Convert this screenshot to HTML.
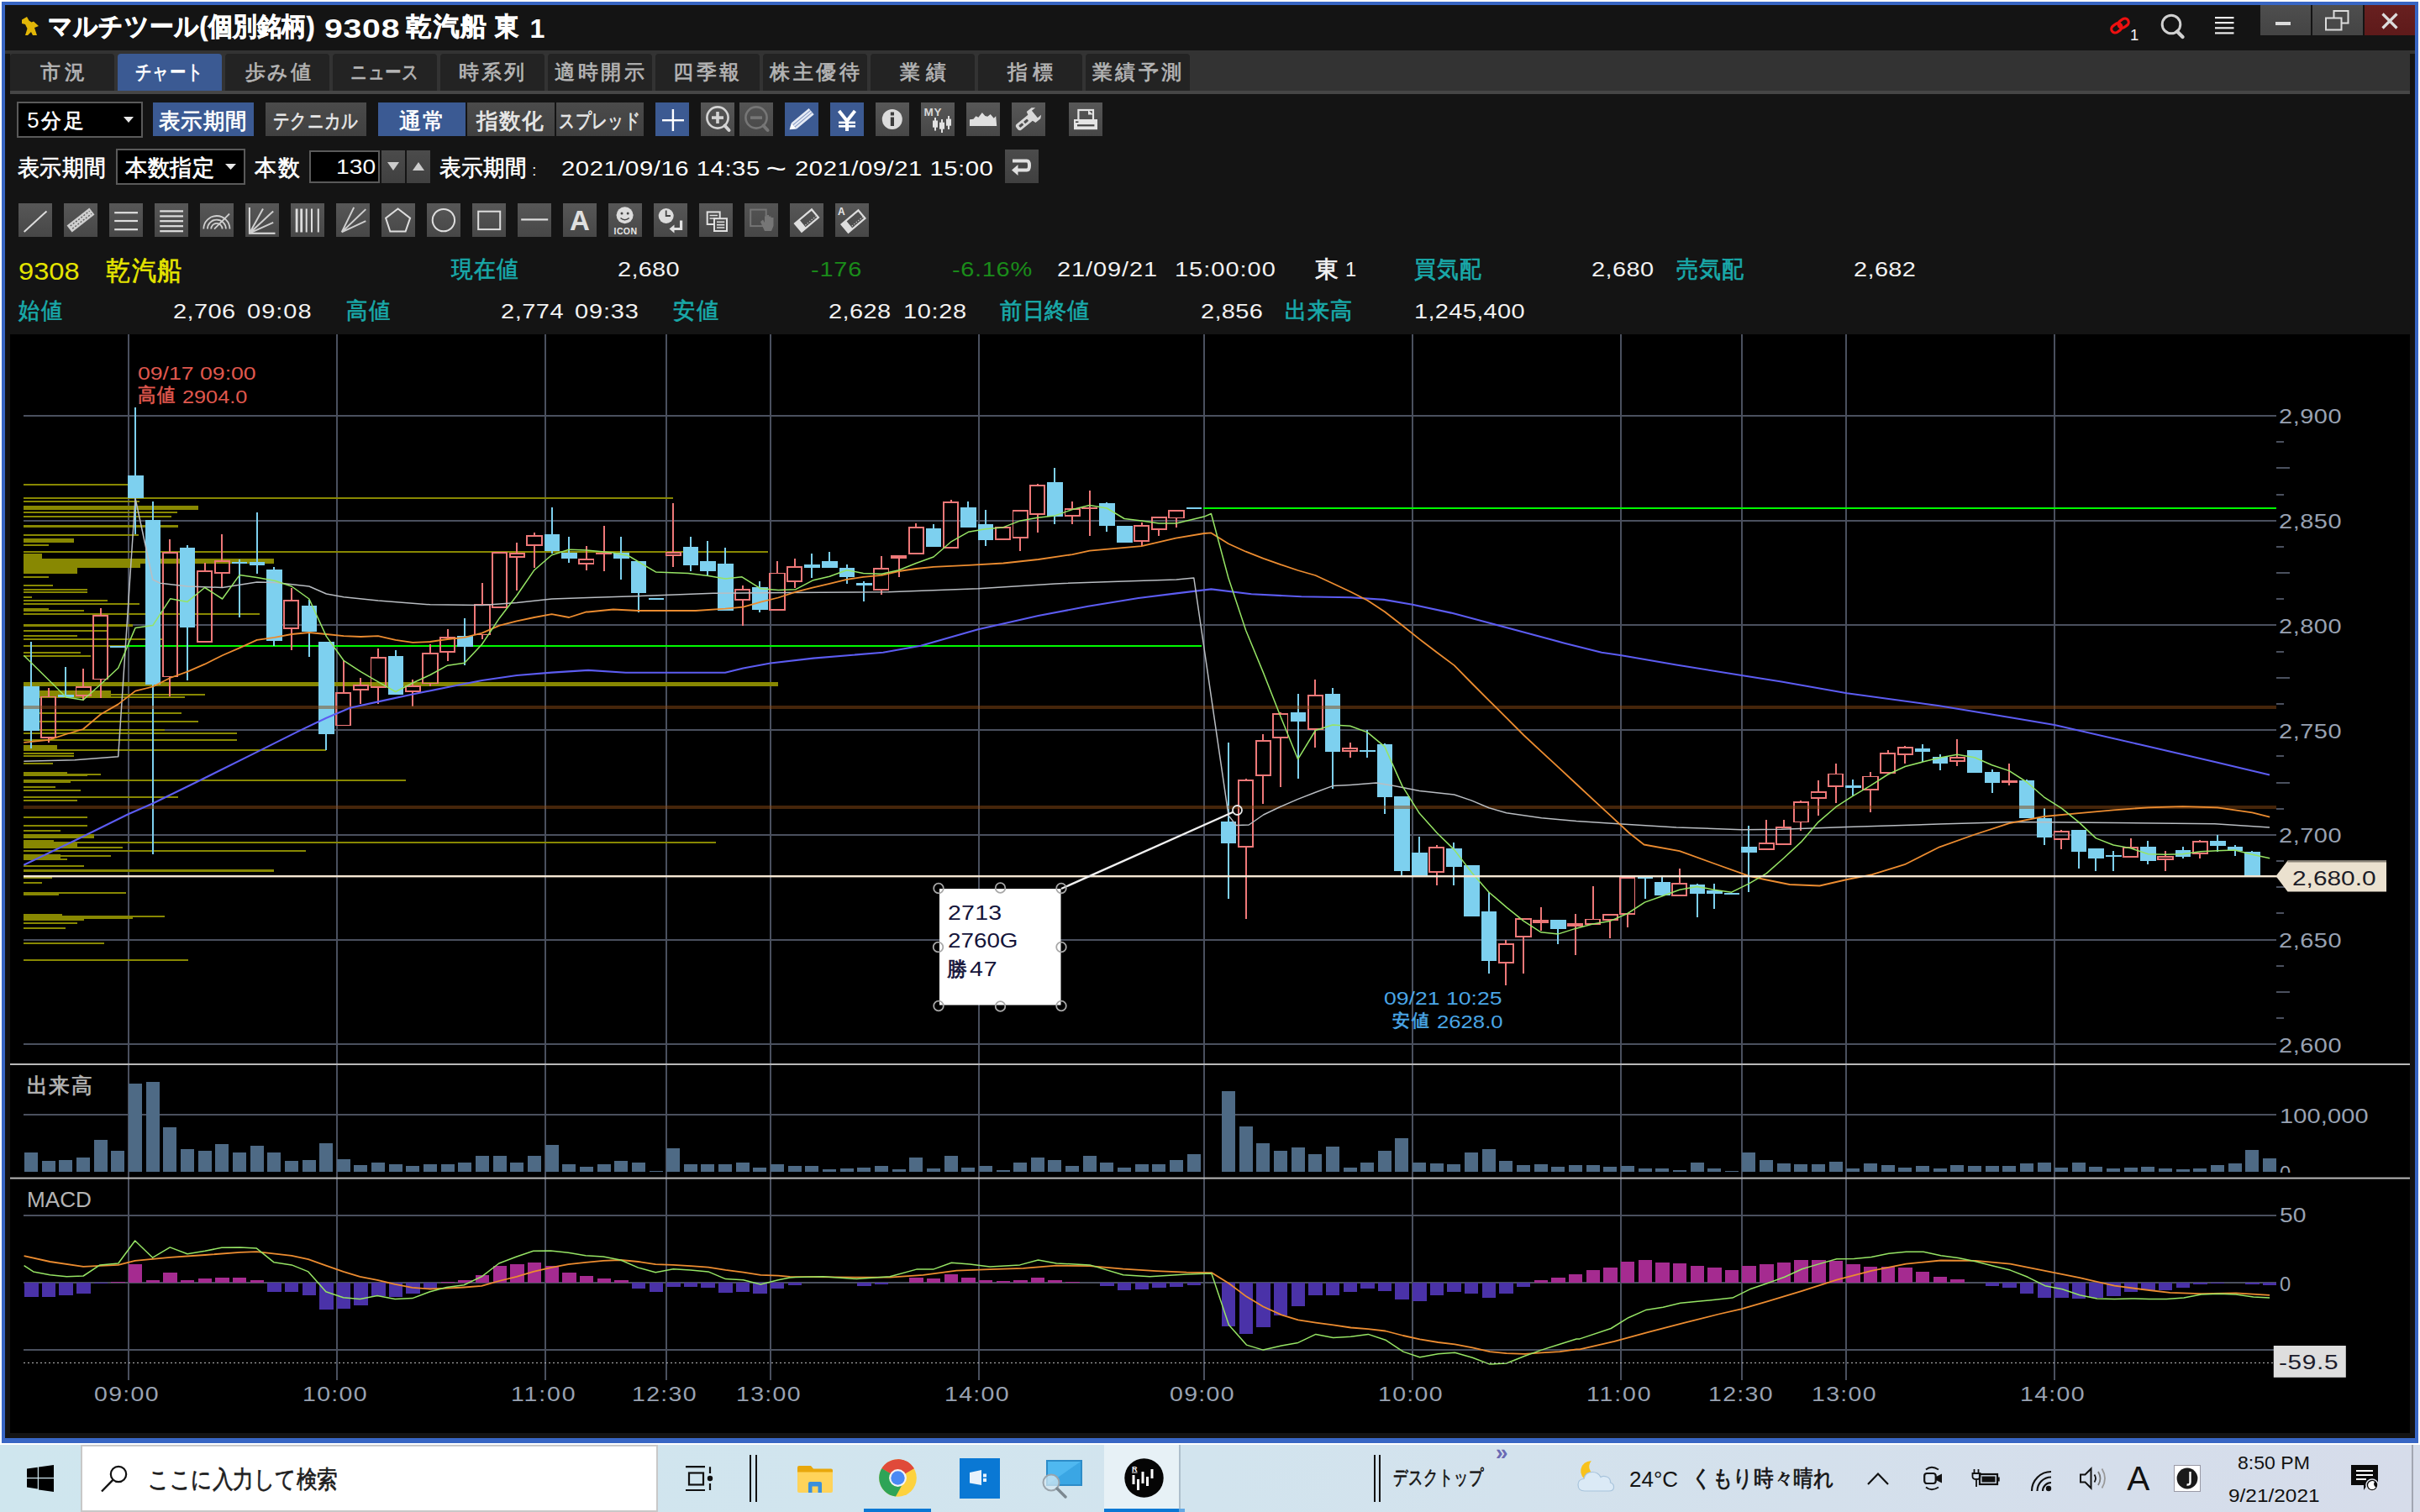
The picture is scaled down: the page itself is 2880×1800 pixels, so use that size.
<!DOCTYPE html>
<html lang="ja"><head><meta charset="utf-8"><title>マルチツール(個別銘柄) 9308 乾汽船 東1</title>
<style>
html,body{margin:0;padding:0;overflow:hidden}
body{width:2880px;height:1800px;position:relative;overflow:hidden;background:#fff;font-family:"Liberation Sans",sans-serif}
.t{position:absolute;white-space:nowrap;line-height:1;font-family:"Liberation Sans",sans-serif}
.j{text-align:justify;text-align-last:justify;overflow:visible;-webkit-text-stroke:0.7px currentColor}
.b{position:absolute}
svg{position:absolute;overflow:visible}
</style></head><body>
<div class="b" style="left:2px;top:2px;width:2876px;height:1716px;background:#3866c4;"></div>
<div class="b" style="left:6px;top:6px;width:2868px;height:1706px;background:#141414;"></div>
<div class="b" style="left:6px;top:59.5px;width:2868px;height:4.5px;background:#333;"></div>
<div class="b" style="left:12px;top:64px;width:2856px;height:44px;background:#333;"></div>
<div class="b" style="left:12px;top:108px;width:2856px;height:4px;background:#464646;"></div>
<svg width="2880" height="1800" viewBox="0 0 2880 1800" style="position:absolute;left:0;top:0">
<rect x="12" y="398" width="2856" height="1308" fill="#000"/>
<g shape-rendering="crispEdges">
<rect x="152" y="398" width="2" height="1245" fill="#4a505e"/>
<rect x="400" y="398" width="2" height="1245" fill="#4a505e"/>
<rect x="648" y="398" width="2" height="1245" fill="#4a505e"/>
<rect x="792" y="398" width="2" height="1245" fill="#4a505e"/>
<rect x="916" y="398" width="2" height="1245" fill="#4a505e"/>
<rect x="1164" y="398" width="2" height="1245" fill="#4a505e"/>
<rect x="1432" y="398" width="2" height="1245" fill="#4a505e"/>
<rect x="1680" y="398" width="2" height="1245" fill="#4a505e"/>
<rect x="1928" y="398" width="2" height="1245" fill="#4a505e"/>
<rect x="2072" y="398" width="2" height="1245" fill="#4a505e"/>
<rect x="2196" y="398" width="2" height="1245" fill="#4a505e"/>
<rect x="2444" y="398" width="2" height="1245" fill="#4a505e"/>
<rect x="28" y="494" width="2681" height="2" fill="#4a505e"/>
<rect x="28" y="618.7" width="2681" height="2" fill="#4a505e"/>
<rect x="28" y="743.4" width="2681" height="2" fill="#4a505e"/>
<rect x="28" y="868.1" width="2681" height="2" fill="#4a505e"/>
<rect x="28" y="992.8" width="2681" height="2" fill="#4a505e"/>
<rect x="28" y="1117.5" width="2681" height="2" fill="#4a505e"/>
<rect x="28" y="1242.2" width="2681" height="2" fill="#4a505e"/>
<rect x="28" y="1325.7" width="2681" height="2" fill="#4a505e"/>
<rect x="28" y="1445.8" width="2681" height="2" fill="#4a505e"/>
<rect x="28" y="1526.2" width="2681" height="2" fill="#4a505e"/>
<rect x="28" y="1606" width="2681" height="2" fill="#4a505e"/>
<rect x="2709" y="525.2" width="9" height="2" fill="#4a505e"/>
<rect x="2709" y="556.4" width="16" height="2" fill="#4a505e"/>
<rect x="2709" y="587.5" width="9" height="2" fill="#4a505e"/>
<rect x="2709" y="649.9" width="9" height="2" fill="#4a505e"/>
<rect x="2709" y="681.1" width="16" height="2" fill="#4a505e"/>
<rect x="2709" y="712.2" width="9" height="2" fill="#4a505e"/>
<rect x="2709" y="774.6" width="9" height="2" fill="#4a505e"/>
<rect x="2709" y="805.8" width="16" height="2" fill="#4a505e"/>
<rect x="2709" y="836.9" width="9" height="2" fill="#4a505e"/>
<rect x="2709" y="899.3" width="9" height="2" fill="#4a505e"/>
<rect x="2709" y="930.5" width="16" height="2" fill="#4a505e"/>
<rect x="2709" y="961.6" width="9" height="2" fill="#4a505e"/>
<rect x="2709" y="1024" width="9" height="2" fill="#4a505e"/>
<rect x="2709" y="1055.1" width="16" height="2" fill="#4a505e"/>
<rect x="2709" y="1086.3" width="9" height="2" fill="#4a505e"/>
<rect x="2709" y="1148.7" width="9" height="2" fill="#4a505e"/>
<rect x="2709" y="1179.8" width="16" height="2" fill="#4a505e"/>
<rect x="2709" y="1211" width="9" height="2" fill="#4a505e"/>
<rect x="28" y="576" width="124" height="2" fill="#888802"/>
<rect x="28" y="596" width="138" height="2" fill="#888802"/>
<rect x="28" y="602" width="208" height="5" fill="#888802"/>
<rect x="28" y="609" width="183" height="2" fill="#888802"/>
<rect x="28" y="614" width="176" height="2" fill="#888802"/>
<rect x="28" y="624.5" width="184" height="3.5" fill="#888802"/>
<rect x="28" y="636" width="137" height="2" fill="#888802"/>
<rect x="28" y="641" width="60" height="4.5" fill="#888802"/>
<rect x="28" y="648" width="30" height="2" fill="#888802"/>
<rect x="28" y="659" width="22" height="6" fill="#888802"/>
<rect x="28" y="665" width="298" height="6" fill="#888802"/>
<rect x="28" y="671" width="139" height="5" fill="#888802"/>
<rect x="28" y="676" width="64" height="7" fill="#888802"/>
<rect x="28" y="686" width="30" height="2" fill="#888802"/>
<rect x="28" y="695.5" width="35" height="2" fill="#888802"/>
<rect x="28" y="700.5" width="76" height="2" fill="#888802"/>
<rect x="28" y="703.5" width="76" height="2" fill="#888802"/>
<rect x="28" y="710" width="10" height="2" fill="#888802"/>
<rect x="28" y="714" width="100" height="2" fill="#888802"/>
<rect x="28" y="718" width="138" height="2" fill="#888802"/>
<rect x="28" y="724" width="30" height="3" fill="#888802"/>
<rect x="28" y="726" width="72" height="2" fill="#888802"/>
<rect x="28" y="729.5" width="281" height="2" fill="#888802"/>
<rect x="28" y="743" width="130" height="3" fill="#888802"/>
<rect x="28" y="749.5" width="100" height="2" fill="#888802"/>
<rect x="28" y="755.5" width="64" height="2" fill="#888802"/>
<rect x="28" y="760" width="165" height="2" fill="#888802"/>
<rect x="28" y="768" width="144" height="2" fill="#888802"/>
<rect x="28" y="776" width="68" height="2" fill="#888802"/>
<rect x="28" y="780" width="80" height="2" fill="#888802"/>
<rect x="28" y="822" width="104" height="9" fill="#888802"/>
<rect x="28" y="825.5" width="216" height="2" fill="#888802"/>
<rect x="28" y="828.5" width="192" height="2" fill="#888802"/>
<rect x="28" y="848" width="188" height="2" fill="#888802"/>
<rect x="28" y="857.5" width="208" height="2" fill="#888802"/>
<rect x="28" y="868" width="168" height="2" fill="#888802"/>
<rect x="28" y="871.5" width="254" height="2" fill="#888802"/>
<rect x="28" y="879.5" width="254" height="2" fill="#888802"/>
<rect x="28" y="887" width="40" height="5" fill="#888802"/>
<rect x="28" y="892" width="360" height="2" fill="#888802"/>
<rect x="28" y="895.5" width="60" height="2" fill="#888802"/>
<rect x="28" y="899" width="60" height="2" fill="#888802"/>
<rect x="28" y="907.5" width="35" height="2" fill="#888802"/>
<rect x="28" y="918.5" width="52" height="2.5" fill="#888802"/>
<rect x="28" y="921" width="92" height="1.5" fill="#888802"/>
<rect x="28" y="922.5" width="76" height="1.5" fill="#888802"/>
<rect x="28" y="928" width="455" height="2" fill="#888802"/>
<rect x="28" y="927.5" width="56" height="4.5" fill="#888802"/>
<rect x="28" y="935.5" width="38" height="2" fill="#888802"/>
<rect x="28" y="940" width="68" height="2" fill="#888802"/>
<rect x="28" y="948" width="184" height="2" fill="#888802"/>
<rect x="28" y="952" width="64" height="2" fill="#888802"/>
<rect x="28" y="972" width="76" height="2" fill="#888802"/>
<rect x="28" y="981.5" width="76" height="2" fill="#888802"/>
<rect x="28" y="987.5" width="44" height="2" fill="#888802"/>
<rect x="28" y="993" width="84" height="4.5" fill="#888802"/>
<rect x="28" y="1000" width="36" height="2" fill="#888802"/>
<rect x="28" y="1002" width="64" height="6" fill="#888802"/>
<rect x="28" y="1008" width="118" height="2" fill="#888802"/>
<rect x="28" y="1012" width="336" height="2" fill="#888802"/>
<rect x="28" y="1018" width="104" height="2" fill="#888802"/>
<rect x="28" y="1017" width="44" height="6" fill="#888802"/>
<rect x="28" y="1022" width="52" height="2" fill="#888802"/>
<rect x="28" y="1030" width="72" height="2" fill="#888802"/>
<rect x="28" y="1034.5" width="298" height="3.5" fill="#888802"/>
<rect x="28" y="1044" width="34" height="2" fill="#888802"/>
<rect x="28" y="1050" width="22" height="2" fill="#888802"/>
<rect x="28" y="1062" width="42" height="4" fill="#888802"/>
<rect x="28" y="1062" width="122" height="2" fill="#888802"/>
<rect x="28" y="1088" width="46" height="7" fill="#888802"/>
<rect x="28" y="1090" width="168" height="2" fill="#888802"/>
<rect x="28" y="1091" width="130" height="2.5" fill="#888802"/>
<rect x="28" y="1093.5" width="72" height="2" fill="#888802"/>
<rect x="28" y="1098" width="64" height="2" fill="#888802"/>
<rect x="28" y="1104" width="50" height="2" fill="#888802"/>
<rect x="28" y="1122" width="96" height="2" fill="#888802"/>
<rect x="28" y="1142" width="196" height="2" fill="#888802"/>
<rect x="28" y="592" width="773" height="2" fill="#888802"/>
<rect x="28" y="656" width="886" height="2" fill="#888802"/>
<rect x="28" y="812" width="898" height="4.5" fill="#888802"/>
<rect x="28" y="1001.5" width="824" height="2" fill="#888802"/>
<rect x="150" y="768" width="1280" height="2" fill="#00fa00"/>
<rect x="1432" y="604.2" width="1277" height="2" fill="#00fa00"/>
</g>
<g shape-rendering="crispEdges">
<rect x="29.1" y="1372.4" width="16" height="22.6" fill="#4e6a85"/>
<rect x="49.8" y="1382.3" width="16" height="12.7" fill="#4e6a85"/>
<rect x="70.4" y="1381.1" width="16" height="13.9" fill="#4e6a85"/>
<rect x="91.1" y="1378.3" width="16" height="16.7" fill="#4e6a85"/>
<rect x="111.7" y="1356.5" width="16" height="38.5" fill="#4e6a85"/>
<rect x="132.3" y="1370.4" width="16" height="24.6" fill="#4e6a85"/>
<rect x="153" y="1289.9" width="16" height="105.1" fill="#4e6a85"/>
<rect x="173.7" y="1287.9" width="16" height="107.1" fill="#4e6a85"/>
<rect x="194.3" y="1342.2" width="16" height="52.8" fill="#4e6a85"/>
<rect x="214.9" y="1368" width="16" height="27" fill="#4e6a85"/>
<rect x="235.6" y="1370.4" width="16" height="24.6" fill="#4e6a85"/>
<rect x="256.2" y="1362.1" width="16" height="32.9" fill="#4e6a85"/>
<rect x="276.9" y="1372.4" width="16" height="22.6" fill="#4e6a85"/>
<rect x="297.5" y="1364.1" width="16" height="30.9" fill="#4e6a85"/>
<rect x="318.2" y="1372.4" width="16" height="22.6" fill="#4e6a85"/>
<rect x="338.9" y="1381.5" width="16" height="13.5" fill="#4e6a85"/>
<rect x="359.5" y="1381.1" width="16" height="13.9" fill="#4e6a85"/>
<rect x="380.1" y="1360.5" width="16" height="34.5" fill="#4e6a85"/>
<rect x="400.8" y="1380.3" width="16" height="14.7" fill="#4e6a85"/>
<rect x="421.4" y="1387.1" width="16" height="7.9" fill="#4e6a85"/>
<rect x="442.1" y="1384.3" width="16" height="10.7" fill="#4e6a85"/>
<rect x="462.8" y="1386.3" width="16" height="8.7" fill="#4e6a85"/>
<rect x="483.4" y="1387.9" width="16" height="7.1" fill="#4e6a85"/>
<rect x="504" y="1385.9" width="16" height="9.1" fill="#4e6a85"/>
<rect x="524.7" y="1386.3" width="16" height="8.7" fill="#4e6a85"/>
<rect x="545.3" y="1383.9" width="16" height="11.1" fill="#4e6a85"/>
<rect x="566" y="1376" width="16" height="19" fill="#4e6a85"/>
<rect x="586.6" y="1376" width="16" height="19" fill="#4e6a85"/>
<rect x="607.3" y="1383.9" width="16" height="11.1" fill="#4e6a85"/>
<rect x="628" y="1376" width="16" height="19" fill="#4e6a85"/>
<rect x="648.6" y="1362.5" width="16" height="32.5" fill="#4e6a85"/>
<rect x="669.2" y="1386.3" width="16" height="8.7" fill="#4e6a85"/>
<rect x="689.9" y="1389.4" width="16" height="5.6" fill="#4e6a85"/>
<rect x="710.5" y="1385.9" width="16" height="9.1" fill="#4e6a85"/>
<rect x="731.2" y="1382.3" width="16" height="12.7" fill="#4e6a85"/>
<rect x="751.8" y="1384.3" width="16" height="10.7" fill="#4e6a85"/>
<rect x="772.5" y="1394" width="16" height="1" fill="#4e6a85"/>
<rect x="793.1" y="1367.2" width="16" height="27.8" fill="#4e6a85"/>
<rect x="813.8" y="1386.3" width="16" height="8.7" fill="#4e6a85"/>
<rect x="834.4" y="1386.3" width="16" height="8.7" fill="#4e6a85"/>
<rect x="855.1" y="1385.5" width="16" height="9.5" fill="#4e6a85"/>
<rect x="875.8" y="1384.3" width="16" height="10.7" fill="#4e6a85"/>
<rect x="896.4" y="1390.2" width="16" height="4.8" fill="#4e6a85"/>
<rect x="917" y="1386.3" width="16" height="8.7" fill="#4e6a85"/>
<rect x="937.7" y="1387.9" width="16" height="7.1" fill="#4e6a85"/>
<rect x="958.3" y="1388.3" width="16" height="6.7" fill="#4e6a85"/>
<rect x="979" y="1392.2" width="16" height="2.8" fill="#4e6a85"/>
<rect x="999.6" y="1391" width="16" height="4" fill="#4e6a85"/>
<rect x="1020.3" y="1390.2" width="16" height="4.8" fill="#4e6a85"/>
<rect x="1040.9" y="1388.3" width="16" height="6.7" fill="#4e6a85"/>
<rect x="1061.6" y="1392.2" width="16" height="2.8" fill="#4e6a85"/>
<rect x="1082.2" y="1377.9" width="16" height="17.1" fill="#4e6a85"/>
<rect x="1102.9" y="1391" width="16" height="4" fill="#4e6a85"/>
<rect x="1123.5" y="1376.4" width="16" height="18.6" fill="#4e6a85"/>
<rect x="1144.2" y="1390.2" width="16" height="4.8" fill="#4e6a85"/>
<rect x="1164.8" y="1387.9" width="16" height="7.1" fill="#4e6a85"/>
<rect x="1185.5" y="1392.6" width="16" height="2.4" fill="#4e6a85"/>
<rect x="1206.1" y="1384.3" width="16" height="10.7" fill="#4e6a85"/>
<rect x="1226.8" y="1378.3" width="16" height="16.7" fill="#4e6a85"/>
<rect x="1247.4" y="1381.1" width="16" height="13.9" fill="#4e6a85"/>
<rect x="1268.1" y="1388.3" width="16" height="6.7" fill="#4e6a85"/>
<rect x="1288.8" y="1376.4" width="16" height="18.6" fill="#4e6a85"/>
<rect x="1309.4" y="1384.3" width="16" height="10.7" fill="#4e6a85"/>
<rect x="1330" y="1389.8" width="16" height="5.2" fill="#4e6a85"/>
<rect x="1350.7" y="1386.3" width="16" height="8.7" fill="#4e6a85"/>
<rect x="1371.3" y="1385.9" width="16" height="9.1" fill="#4e6a85"/>
<rect x="1392" y="1381.1" width="16" height="13.9" fill="#4e6a85"/>
<rect x="1412.6" y="1374.4" width="16" height="20.6" fill="#4e6a85"/>
<rect x="1453.9" y="1298.6" width="16" height="96.4" fill="#4e6a85"/>
<rect x="1474.6" y="1340.7" width="16" height="54.3" fill="#4e6a85"/>
<rect x="1495.2" y="1360.5" width="16" height="34.5" fill="#4e6a85"/>
<rect x="1515.9" y="1370" width="16" height="25" fill="#4e6a85"/>
<rect x="1536.5" y="1366.4" width="16" height="28.6" fill="#4e6a85"/>
<rect x="1557.2" y="1374.4" width="16" height="20.6" fill="#4e6a85"/>
<rect x="1577.8" y="1364.5" width="16" height="30.5" fill="#4e6a85"/>
<rect x="1598.5" y="1390.2" width="16" height="4.8" fill="#4e6a85"/>
<rect x="1619.1" y="1384.3" width="16" height="10.7" fill="#4e6a85"/>
<rect x="1639.8" y="1370.4" width="16" height="24.6" fill="#4e6a85"/>
<rect x="1660.4" y="1354.5" width="16" height="40.5" fill="#4e6a85"/>
<rect x="1681.1" y="1383.9" width="16" height="11.1" fill="#4e6a85"/>
<rect x="1701.8" y="1385.1" width="16" height="9.9" fill="#4e6a85"/>
<rect x="1722.4" y="1385.9" width="16" height="9.1" fill="#4e6a85"/>
<rect x="1743" y="1372.4" width="16" height="22.6" fill="#4e6a85"/>
<rect x="1763.7" y="1368.4" width="16" height="26.6" fill="#4e6a85"/>
<rect x="1784.3" y="1382.3" width="16" height="12.7" fill="#4e6a85"/>
<rect x="1805" y="1387.1" width="16" height="7.9" fill="#4e6a85"/>
<rect x="1825.6" y="1385.9" width="16" height="9.1" fill="#4e6a85"/>
<rect x="1846.3" y="1388.7" width="16" height="6.3" fill="#4e6a85"/>
<rect x="1866.9" y="1386.7" width="16" height="8.3" fill="#4e6a85"/>
<rect x="1887.6" y="1386.7" width="16" height="8.3" fill="#4e6a85"/>
<rect x="1908.2" y="1389.2" width="16" height="5.8" fill="#4e6a85"/>
<rect x="1928.9" y="1387.6" width="16" height="7.4" fill="#4e6a85"/>
<rect x="1949.5" y="1391.3" width="16" height="3.7" fill="#4e6a85"/>
<rect x="1970.2" y="1390.5" width="16" height="4.5" fill="#4e6a85"/>
<rect x="1990.8" y="1392.5" width="16" height="2.5" fill="#4e6a85"/>
<rect x="2011.5" y="1384.3" width="16" height="10.7" fill="#4e6a85"/>
<rect x="2032.1" y="1390.9" width="16" height="4.1" fill="#4e6a85"/>
<rect x="2052.8" y="1394" width="16" height="1" fill="#4e6a85"/>
<rect x="2073.4" y="1371.9" width="16" height="23.1" fill="#4e6a85"/>
<rect x="2094.1" y="1381" width="16" height="14" fill="#4e6a85"/>
<rect x="2114.8" y="1384.7" width="16" height="10.3" fill="#4e6a85"/>
<rect x="2135.4" y="1386.3" width="16" height="8.7" fill="#4e6a85"/>
<rect x="2156.1" y="1386.3" width="16" height="8.7" fill="#4e6a85"/>
<rect x="2176.7" y="1382.6" width="16" height="12.4" fill="#4e6a85"/>
<rect x="2197.3" y="1390.9" width="16" height="4.1" fill="#4e6a85"/>
<rect x="2218" y="1385.1" width="16" height="9.9" fill="#4e6a85"/>
<rect x="2238.6" y="1386.7" width="16" height="8.3" fill="#4e6a85"/>
<rect x="2259.3" y="1390" width="16" height="5" fill="#4e6a85"/>
<rect x="2279.9" y="1388.4" width="16" height="6.6" fill="#4e6a85"/>
<rect x="2300.6" y="1391.3" width="16" height="3.7" fill="#4e6a85"/>
<rect x="2321.2" y="1386.7" width="16" height="8.3" fill="#4e6a85"/>
<rect x="2341.9" y="1388.4" width="16" height="6.6" fill="#4e6a85"/>
<rect x="2362.5" y="1387.6" width="16" height="7.4" fill="#4e6a85"/>
<rect x="2383.2" y="1388.4" width="16" height="6.6" fill="#4e6a85"/>
<rect x="2403.8" y="1385.1" width="16" height="9.9" fill="#4e6a85"/>
<rect x="2424.5" y="1383.8" width="16" height="11.2" fill="#4e6a85"/>
<rect x="2445.1" y="1390" width="16" height="5" fill="#4e6a85"/>
<rect x="2465.8" y="1384.3" width="16" height="10.7" fill="#4e6a85"/>
<rect x="2486.4" y="1389.2" width="16" height="5.8" fill="#4e6a85"/>
<rect x="2507.1" y="1390.9" width="16" height="4.1" fill="#4e6a85"/>
<rect x="2527.8" y="1390" width="16" height="5" fill="#4e6a85"/>
<rect x="2548.4" y="1388.8" width="16" height="6.2" fill="#4e6a85"/>
<rect x="2569" y="1390.9" width="16" height="4.1" fill="#4e6a85"/>
<rect x="2589.7" y="1391.7" width="16" height="3.3" fill="#4e6a85"/>
<rect x="2610.3" y="1390.9" width="16" height="4.1" fill="#4e6a85"/>
<rect x="2631" y="1387.1" width="16" height="7.9" fill="#4e6a85"/>
<rect x="2651.6" y="1385.1" width="16" height="9.9" fill="#4e6a85"/>
<rect x="2672.3" y="1368.6" width="16" height="26.4" fill="#4e6a85"/>
<rect x="2692.9" y="1379.3" width="16" height="15.7" fill="#4e6a85"/>
<rect x="29.1" y="1527.2" width="16.4" height="17.1" fill="#4a32a8"/>
<rect x="49.8" y="1527.2" width="16.4" height="17.1" fill="#4a32a8"/>
<rect x="70.4" y="1527.2" width="16.4" height="15.1" fill="#4a32a8"/>
<rect x="91.1" y="1527.2" width="16.4" height="12.3" fill="#4a32a8"/>
<rect x="111.7" y="1527.2" width="16.4" height="1.2" fill="#4a32a8"/>
<rect x="132.3" y="1525.6" width="16.4" height="1.6" fill="#a52b90"/>
<rect x="153" y="1504.6" width="16.4" height="22.6" fill="#a52b90"/>
<rect x="173.7" y="1524.4" width="16.4" height="2.8" fill="#a52b90"/>
<rect x="194.3" y="1515.3" width="16.4" height="11.9" fill="#a52b90"/>
<rect x="214.9" y="1524.4" width="16.4" height="2.8" fill="#a52b90"/>
<rect x="235.6" y="1521.6" width="16.4" height="5.6" fill="#a52b90"/>
<rect x="256.2" y="1520.5" width="16.4" height="6.7" fill="#a52b90"/>
<rect x="276.9" y="1521.2" width="16.4" height="6" fill="#a52b90"/>
<rect x="297.5" y="1523.6" width="16.4" height="3.6" fill="#a52b90"/>
<rect x="318.2" y="1527.2" width="16.4" height="10.3" fill="#4a32a8"/>
<rect x="338.9" y="1527.2" width="16.4" height="10.3" fill="#4a32a8"/>
<rect x="359.5" y="1527.2" width="16.4" height="15.1" fill="#4a32a8"/>
<rect x="380.1" y="1527.2" width="16.4" height="31.7" fill="#4a32a8"/>
<rect x="400.8" y="1527.2" width="16.4" height="30.9" fill="#4a32a8"/>
<rect x="421.4" y="1527.2" width="16.4" height="27" fill="#4a32a8"/>
<rect x="442.1" y="1527.2" width="16.4" height="15.9" fill="#4a32a8"/>
<rect x="462.8" y="1527.2" width="16.4" height="17.1" fill="#4a32a8"/>
<rect x="483.4" y="1527.2" width="16.4" height="13.1" fill="#4a32a8"/>
<rect x="504" y="1527.2" width="16.4" height="6.3" fill="#4a32a8"/>
<rect x="524.7" y="1525.6" width="16.4" height="1.6" fill="#a52b90"/>
<rect x="545.3" y="1524.4" width="16.4" height="2.8" fill="#a52b90"/>
<rect x="566" y="1517.7" width="16.4" height="9.5" fill="#a52b90"/>
<rect x="586.6" y="1507.4" width="16.4" height="19.8" fill="#a52b90"/>
<rect x="607.3" y="1504.6" width="16.4" height="22.6" fill="#a52b90"/>
<rect x="628" y="1503.4" width="16.4" height="23.8" fill="#a52b90"/>
<rect x="648.6" y="1507.4" width="16.4" height="19.8" fill="#a52b90"/>
<rect x="669.2" y="1514.5" width="16.4" height="12.7" fill="#a52b90"/>
<rect x="689.9" y="1518.5" width="16.4" height="8.7" fill="#a52b90"/>
<rect x="710.5" y="1521.6" width="16.4" height="5.6" fill="#a52b90"/>
<rect x="731.2" y="1524.4" width="16.4" height="2.8" fill="#a52b90"/>
<rect x="751.8" y="1527.2" width="16.4" height="6.3" fill="#4a32a8"/>
<rect x="772.5" y="1527.2" width="16.4" height="10.3" fill="#4a32a8"/>
<rect x="793.1" y="1527.2" width="16.4" height="5.2" fill="#4a32a8"/>
<rect x="813.8" y="1527.2" width="16.4" height="4.4" fill="#4a32a8"/>
<rect x="834.4" y="1527.2" width="16.4" height="6" fill="#4a32a8"/>
<rect x="855.1" y="1527.2" width="16.4" height="11.9" fill="#4a32a8"/>
<rect x="875.8" y="1527.2" width="16.4" height="11.1" fill="#4a32a8"/>
<rect x="896.4" y="1527.2" width="16.4" height="13.1" fill="#4a32a8"/>
<rect x="917" y="1527.2" width="16.4" height="7.1" fill="#4a32a8"/>
<rect x="937.7" y="1527.2" width="16.4" height="3.2" fill="#4a32a8"/>
<rect x="1020.3" y="1527.2" width="16.4" height="4" fill="#4a32a8"/>
<rect x="1040.9" y="1527.2" width="16.4" height="1.6" fill="#4a32a8"/>
<rect x="1082.2" y="1521.2" width="16.4" height="6" fill="#a52b90"/>
<rect x="1102.9" y="1522.4" width="16.4" height="4.8" fill="#a52b90"/>
<rect x="1123.5" y="1517.3" width="16.4" height="9.9" fill="#a52b90"/>
<rect x="1144.2" y="1520.5" width="16.4" height="6.7" fill="#a52b90"/>
<rect x="1164.8" y="1524.4" width="16.4" height="2.8" fill="#a52b90"/>
<rect x="1185.5" y="1525.2" width="16.4" height="2" fill="#a52b90"/>
<rect x="1206.1" y="1523.6" width="16.4" height="3.6" fill="#a52b90"/>
<rect x="1226.8" y="1520.5" width="16.4" height="6.7" fill="#a52b90"/>
<rect x="1247.4" y="1524.4" width="16.4" height="2.8" fill="#a52b90"/>
<rect x="1268.1" y="1525.6" width="16.4" height="1.6" fill="#a52b90"/>
<rect x="1309.4" y="1527.2" width="16.4" height="4" fill="#4a32a8"/>
<rect x="1330" y="1527.2" width="16.4" height="9.1" fill="#4a32a8"/>
<rect x="1350.7" y="1527.2" width="16.4" height="7.9" fill="#4a32a8"/>
<rect x="1371.3" y="1527.2" width="16.4" height="6" fill="#4a32a8"/>
<rect x="1392" y="1527.2" width="16.4" height="4.4" fill="#4a32a8"/>
<rect x="1412.6" y="1527.2" width="16.4" height="2.4" fill="#4a32a8"/>
<rect x="1453.9" y="1527.2" width="16.4" height="51.6" fill="#4a32a8"/>
<rect x="1474.6" y="1527.2" width="16.4" height="60.7" fill="#4a32a8"/>
<rect x="1495.2" y="1527.2" width="16.4" height="52.8" fill="#4a32a8"/>
<rect x="1515.9" y="1527.2" width="16.4" height="38.9" fill="#4a32a8"/>
<rect x="1536.5" y="1527.2" width="16.4" height="28.2" fill="#4a32a8"/>
<rect x="1557.2" y="1527.2" width="16.4" height="15.1" fill="#4a32a8"/>
<rect x="1577.8" y="1527.2" width="16.4" height="15.1" fill="#4a32a8"/>
<rect x="1598.5" y="1527.2" width="16.4" height="11.1" fill="#4a32a8"/>
<rect x="1619.1" y="1527.2" width="16.4" height="7.1" fill="#4a32a8"/>
<rect x="1639.8" y="1527.2" width="16.4" height="9.9" fill="#4a32a8"/>
<rect x="1660.4" y="1527.2" width="16.4" height="19.8" fill="#4a32a8"/>
<rect x="1681.1" y="1527.2" width="16.4" height="21.8" fill="#4a32a8"/>
<rect x="1701.8" y="1527.2" width="16.4" height="15.1" fill="#4a32a8"/>
<rect x="1722.4" y="1527.2" width="16.4" height="10.3" fill="#4a32a8"/>
<rect x="1743" y="1527.2" width="16.4" height="13.1" fill="#4a32a8"/>
<rect x="1763.7" y="1527.2" width="16.4" height="17.9" fill="#4a32a8"/>
<rect x="1784.3" y="1527.2" width="16.4" height="13.1" fill="#4a32a8"/>
<rect x="1805" y="1527.2" width="16.4" height="4.4" fill="#4a32a8"/>
<rect x="1825.6" y="1524.4" width="16.4" height="2.8" fill="#a52b90"/>
<rect x="1846.3" y="1521.2" width="16.4" height="6" fill="#a52b90"/>
<rect x="1866.9" y="1517.3" width="16.4" height="9.9" fill="#a52b90"/>
<rect x="1887.6" y="1512.3" width="16.4" height="14.9" fill="#a52b90"/>
<rect x="1908.2" y="1509.4" width="16.4" height="17.8" fill="#a52b90"/>
<rect x="1928.9" y="1502.4" width="16.4" height="24.8" fill="#a52b90"/>
<rect x="1949.5" y="1500.3" width="16.4" height="26.9" fill="#a52b90"/>
<rect x="1970.2" y="1503.2" width="16.4" height="24" fill="#a52b90"/>
<rect x="1990.8" y="1504.1" width="16.4" height="23.1" fill="#a52b90"/>
<rect x="2011.5" y="1506.5" width="16.4" height="20.7" fill="#a52b90"/>
<rect x="2032.1" y="1508.6" width="16.4" height="18.6" fill="#a52b90"/>
<rect x="2052.8" y="1511.5" width="16.4" height="15.7" fill="#a52b90"/>
<rect x="2073.4" y="1507.4" width="16.4" height="19.8" fill="#a52b90"/>
<rect x="2094.1" y="1505.3" width="16.4" height="21.9" fill="#a52b90"/>
<rect x="2114.8" y="1503.2" width="16.4" height="24" fill="#a52b90"/>
<rect x="2135.4" y="1500.3" width="16.4" height="26.9" fill="#a52b90"/>
<rect x="2156.1" y="1500.3" width="16.4" height="26.9" fill="#a52b90"/>
<rect x="2176.7" y="1501.2" width="16.4" height="26" fill="#a52b90"/>
<rect x="2197.3" y="1505.3" width="16.4" height="21.9" fill="#a52b90"/>
<rect x="2218" y="1508.2" width="16.4" height="19" fill="#a52b90"/>
<rect x="2238.6" y="1508.2" width="16.4" height="19" fill="#a52b90"/>
<rect x="2259.3" y="1509.4" width="16.4" height="17.8" fill="#a52b90"/>
<rect x="2279.9" y="1513.6" width="16.4" height="13.6" fill="#a52b90"/>
<rect x="2300.6" y="1519.8" width="16.4" height="7.4" fill="#a52b90"/>
<rect x="2321.2" y="1522.7" width="16.4" height="4.5" fill="#a52b90"/>
<rect x="2362.5" y="1527.2" width="16.4" height="4.1" fill="#4a32a8"/>
<rect x="2383.2" y="1527.2" width="16.4" height="6.2" fill="#4a32a8"/>
<rect x="2403.8" y="1527.2" width="16.4" height="12.4" fill="#4a32a8"/>
<rect x="2424.5" y="1527.2" width="16.4" height="17.4" fill="#4a32a8"/>
<rect x="2445.1" y="1527.2" width="16.4" height="17.4" fill="#4a32a8"/>
<rect x="2465.8" y="1527.2" width="16.4" height="18.6" fill="#4a32a8"/>
<rect x="2486.4" y="1527.2" width="16.4" height="17.4" fill="#4a32a8"/>
<rect x="2507.1" y="1527.2" width="16.4" height="16.1" fill="#4a32a8"/>
<rect x="2527.8" y="1527.2" width="16.4" height="11.2" fill="#4a32a8"/>
<rect x="2548.4" y="1527.2" width="16.4" height="8.3" fill="#4a32a8"/>
<rect x="2569" y="1527.2" width="16.4" height="8.3" fill="#4a32a8"/>
<rect x="2589.7" y="1527.2" width="16.4" height="5.8" fill="#4a32a8"/>
<rect x="2610.3" y="1527.2" width="16.4" height="1.7" fill="#4a32a8"/>
<rect x="2631" y="1527.2" width="16.4" height="0.8" fill="#4a32a8"/>
<rect x="2672.3" y="1527.2" width="16.4" height="2.1" fill="#4a32a8"/>
<rect x="2692.9" y="1527.2" width="16.4" height="2.9" fill="#4a32a8"/>
</g>
<g shape-rendering="crispEdges">
<rect x="36.1" y="764" width="2" height="127.3" fill="#7dd0ef"/>
<rect x="28.1" y="816.6" width="18.5" height="53" fill="#7dd0ef"/>
<rect x="56.8" y="819" width="2" height="10.5" fill="#ee7878"/>
<rect x="56.8" y="878.4" width="2" height="5.5" fill="#ee7878"/>
<rect x="49.1" y="829.5" width="17.2" height="48.9" fill="none" stroke="#ee7878" stroke-width="1.9"/>
<rect x="77.4" y="793.7" width="2" height="36.3" fill="#7dd0ef"/>
<rect x="69.4" y="826.5" width="18.5" height="3.5" fill="#7dd0ef"/>
<rect x="98.1" y="795.8" width="2" height="21.8" fill="#ee7878"/>
<rect x="98.1" y="828.4" width="2" height="5.5" fill="#ee7878"/>
<rect x="90.5" y="817.6" width="17.2" height="10.8" fill="none" stroke="#ee7878" stroke-width="1.9"/>
<rect x="118.7" y="724.4" width="2" height="8.6" fill="#ee7878"/>
<rect x="118.7" y="808.5" width="2" height="22.4" fill="#ee7878"/>
<rect x="111.1" y="733" width="17.2" height="75.5" fill="none" stroke="#ee7878" stroke-width="1.9"/>
<rect x="131.3" y="769.3" width="18.5" height="2" fill="#7dd0ef"/>
<rect x="160" y="484.6" width="2" height="150.9" fill="#7dd0ef"/>
<rect x="152" y="566" width="18.5" height="27" fill="#7dd0ef"/>
<rect x="180.7" y="596.8" width="2" height="420.1" fill="#7dd0ef"/>
<rect x="172.7" y="619" width="18.5" height="195.5" fill="#7dd0ef"/>
<rect x="201.3" y="642.4" width="2" height="15.6" fill="#ee7878"/>
<rect x="201.3" y="805.5" width="2" height="23.9" fill="#ee7878"/>
<rect x="193.7" y="658" width="17.2" height="147.5" fill="none" stroke="#ee7878" stroke-width="1.9"/>
<rect x="221.9" y="649" width="2" height="160.5" fill="#7dd0ef"/>
<rect x="213.9" y="652" width="18.5" height="95" fill="#7dd0ef"/>
<rect x="242.6" y="669.8" width="2" height="10.5" fill="#ee7878"/>
<rect x="235" y="680.3" width="17.2" height="83.6" fill="none" stroke="#ee7878" stroke-width="1.9"/>
<rect x="263.2" y="636.4" width="2" height="31.4" fill="#ee7878"/>
<rect x="263.2" y="682" width="2" height="17.5" fill="#ee7878"/>
<rect x="255.7" y="667.8" width="17.2" height="14.2" fill="none" stroke="#ee7878" stroke-width="1.9"/>
<rect x="283.9" y="666" width="2" height="69" fill="#7dd0ef"/>
<rect x="275.9" y="669" width="18.5" height="2" fill="#7dd0ef"/>
<rect x="304.5" y="609.6" width="2" height="73.4" fill="#7dd0ef"/>
<rect x="296.5" y="668.9" width="18.5" height="3.8" fill="#7dd0ef"/>
<rect x="325.2" y="675" width="2" height="94" fill="#7dd0ef"/>
<rect x="317.2" y="678" width="18.5" height="84.5" fill="#7dd0ef"/>
<rect x="345.9" y="699.5" width="2" height="15.8" fill="#ee7878"/>
<rect x="345.9" y="748" width="2" height="26.4" fill="#ee7878"/>
<rect x="338.2" y="715.3" width="17.2" height="32.7" fill="none" stroke="#ee7878" stroke-width="1.9"/>
<rect x="366.5" y="714.4" width="2" height="67.4" fill="#7dd0ef"/>
<rect x="358.5" y="721.4" width="18.5" height="30.6" fill="#7dd0ef"/>
<rect x="387.1" y="764" width="2" height="129.4" fill="#7dd0ef"/>
<rect x="379.1" y="764" width="18.5" height="110" fill="#7dd0ef"/>
<rect x="407.8" y="786.3" width="2" height="39.1" fill="#ee7878"/>
<rect x="400.2" y="825.4" width="17.2" height="38.1" fill="none" stroke="#ee7878" stroke-width="1.9"/>
<rect x="428.4" y="806.5" width="2" height="9.9" fill="#ee7878"/>
<rect x="428.4" y="821" width="2" height="17.4" fill="#ee7878"/>
<rect x="420.8" y="816.4" width="17.2" height="4.6" fill="none" stroke="#ee7878" stroke-width="1.9"/>
<rect x="449.1" y="772.3" width="2" height="10.5" fill="#ee7878"/>
<rect x="449.1" y="818" width="2" height="20.4" fill="#ee7878"/>
<rect x="441.5" y="782.8" width="17.2" height="35.2" fill="none" stroke="#ee7878" stroke-width="1.9"/>
<rect x="469.8" y="774.4" width="2" height="52.9" fill="#7dd0ef"/>
<rect x="461.8" y="781" width="18.5" height="46.3" fill="#7dd0ef"/>
<rect x="490.4" y="808.6" width="2" height="8.4" fill="#ee7878"/>
<rect x="490.4" y="823.4" width="2" height="17.9" fill="#ee7878"/>
<rect x="482.8" y="817" width="17.2" height="6.4" fill="none" stroke="#ee7878" stroke-width="1.9"/>
<rect x="511" y="767" width="2" height="10.8" fill="#ee7878"/>
<rect x="511" y="813.5" width="2" height="3.1" fill="#ee7878"/>
<rect x="503.4" y="777.8" width="17.2" height="35.7" fill="none" stroke="#ee7878" stroke-width="1.9"/>
<rect x="531.7" y="748.5" width="2" height="10.5" fill="#ee7878"/>
<rect x="531.7" y="775.8" width="2" height="11.4" fill="#ee7878"/>
<rect x="524.1" y="759" width="17.2" height="16.8" fill="none" stroke="#ee7878" stroke-width="1.9"/>
<rect x="552.3" y="736.3" width="2" height="55.9" fill="#7dd0ef"/>
<rect x="544.3" y="757" width="18.5" height="13" fill="#7dd0ef"/>
<rect x="573" y="694" width="2" height="26.3" fill="#ee7878"/>
<rect x="573" y="755.5" width="2" height="5.5" fill="#ee7878"/>
<rect x="565.4" y="720.3" width="17.2" height="35.2" fill="none" stroke="#ee7878" stroke-width="1.9"/>
<rect x="586" y="658" width="17.2" height="65.4" fill="none" stroke="#ee7878" stroke-width="1.9"/>
<rect x="614.3" y="646" width="2" height="12.9" fill="#ee7878"/>
<rect x="614.3" y="663.4" width="2" height="39.1" fill="#ee7878"/>
<rect x="606.7" y="658.9" width="17.2" height="4.5" fill="none" stroke="#ee7878" stroke-width="1.9"/>
<rect x="635" y="634" width="2" height="4" fill="#ee7878"/>
<rect x="635" y="649.4" width="2" height="26.3" fill="#ee7878"/>
<rect x="627.4" y="638" width="17.2" height="11.4" fill="none" stroke="#ee7878" stroke-width="1.9"/>
<rect x="655.6" y="604.3" width="2" height="55" fill="#7dd0ef"/>
<rect x="647.6" y="636.4" width="18.5" height="19.4" fill="#7dd0ef"/>
<rect x="676.2" y="638.5" width="2" height="31.3" fill="#7dd0ef"/>
<rect x="668.2" y="657.9" width="18.5" height="7.4" fill="#7dd0ef"/>
<rect x="696.9" y="649.5" width="2" height="16.8" fill="#ee7878"/>
<rect x="696.9" y="671" width="2" height="8.3" fill="#ee7878"/>
<rect x="689.3" y="666.3" width="17.2" height="4.7" fill="none" stroke="#ee7878" stroke-width="1.9"/>
<rect x="717.5" y="626.4" width="2" height="32.6" fill="#ee7878"/>
<rect x="717.5" y="658.5" width="2" height="21.5" fill="#ee7878"/>
<rect x="709" y="658" width="19" height="2" fill="#ee7878"/>
<rect x="738.2" y="639.2" width="2" height="50.6" fill="#7dd0ef"/>
<rect x="730.2" y="658" width="18.5" height="7.1" fill="#7dd0ef"/>
<rect x="758.8" y="667.5" width="2" height="61.9" fill="#7dd0ef"/>
<rect x="750.8" y="668.1" width="18.5" height="37.5" fill="#7dd0ef"/>
<rect x="771.5" y="711.5" width="18.5" height="2" fill="#7dd0ef"/>
<rect x="800.1" y="599" width="2" height="59.1" fill="#ee7878"/>
<rect x="800.1" y="661.1" width="2" height="13.9" fill="#ee7878"/>
<rect x="792.5" y="658.1" width="17.2" height="3" fill="none" stroke="#ee7878" stroke-width="1.9"/>
<rect x="820.8" y="639.2" width="2" height="40.8" fill="#7dd0ef"/>
<rect x="812.8" y="651.1" width="18.5" height="21.5" fill="#7dd0ef"/>
<rect x="841.4" y="644.3" width="2" height="41.1" fill="#7dd0ef"/>
<rect x="833.4" y="668.1" width="18.5" height="11.9" fill="#7dd0ef"/>
<rect x="862.1" y="652" width="2" height="75" fill="#7dd0ef"/>
<rect x="854.1" y="671.1" width="18.5" height="55.9" fill="#7dd0ef"/>
<rect x="882.8" y="696.7" width="2" height="5.1" fill="#ee7878"/>
<rect x="882.8" y="714.1" width="2" height="30.8" fill="#ee7878"/>
<rect x="875.1" y="701.8" width="17.2" height="12.3" fill="none" stroke="#ee7878" stroke-width="1.9"/>
<rect x="903.4" y="691.9" width="2" height="37.5" fill="#7dd0ef"/>
<rect x="895.4" y="698.8" width="18.5" height="26.7" fill="#7dd0ef"/>
<rect x="924" y="668.4" width="2" height="14.1" fill="#ee7878"/>
<rect x="916.4" y="682.5" width="17.2" height="43.5" fill="none" stroke="#ee7878" stroke-width="1.9"/>
<rect x="944.7" y="664.5" width="2" height="10.5" fill="#ee7878"/>
<rect x="944.7" y="691.8" width="2" height="8.4" fill="#ee7878"/>
<rect x="937.1" y="675" width="17.2" height="16.8" fill="none" stroke="#ee7878" stroke-width="1.9"/>
<rect x="965.3" y="658.6" width="2" height="29.1" fill="#7dd0ef"/>
<rect x="957.3" y="672" width="18.5" height="3.5" fill="#7dd0ef"/>
<rect x="986" y="656.5" width="2" height="19" fill="#7dd0ef"/>
<rect x="978" y="668.1" width="18.5" height="7.4" fill="#7dd0ef"/>
<rect x="1006.6" y="672" width="2" height="22.9" fill="#7dd0ef"/>
<rect x="998.6" y="676.4" width="18.5" height="11" fill="#7dd0ef"/>
<rect x="1027.3" y="691.9" width="2" height="23.8" fill="#7dd0ef"/>
<rect x="1019.3" y="693.7" width="18.5" height="3.6" fill="#7dd0ef"/>
<rect x="1047.9" y="662.1" width="2" height="15.3" fill="#ee7878"/>
<rect x="1047.9" y="701.6" width="2" height="6.1" fill="#ee7878"/>
<rect x="1040.3" y="677.4" width="17.2" height="24.2" fill="none" stroke="#ee7878" stroke-width="1.9"/>
<rect x="1068.6" y="664.1" width="2" height="23.3" fill="#ee7878"/>
<rect x="1061" y="661.7" width="17.2" height="2.4" fill="none" stroke="#ee7878" stroke-width="1.9"/>
<rect x="1089.2" y="622.9" width="2" height="4.8" fill="#ee7878"/>
<rect x="1081.7" y="627.7" width="17.2" height="31.3" fill="none" stroke="#ee7878" stroke-width="1.9"/>
<rect x="1109.9" y="624.3" width="2" height="26.2" fill="#7dd0ef"/>
<rect x="1101.9" y="629.4" width="18.5" height="21.1" fill="#7dd0ef"/>
<rect x="1130.5" y="594.6" width="2" height="3.4" fill="#ee7878"/>
<rect x="1123" y="598" width="17.2" height="53.6" fill="none" stroke="#ee7878" stroke-width="1.9"/>
<rect x="1151.2" y="596.7" width="2" height="31.2" fill="#7dd0ef"/>
<rect x="1143.2" y="604.1" width="18.5" height="23.8" fill="#7dd0ef"/>
<rect x="1171.8" y="606.5" width="2" height="43.7" fill="#7dd0ef"/>
<rect x="1163.8" y="624.3" width="18.5" height="18.8" fill="#7dd0ef"/>
<rect x="1184.9" y="628.3" width="17.2" height="13.8" fill="none" stroke="#ee7878" stroke-width="1.9"/>
<rect x="1213.1" y="606.5" width="2" height="1.6" fill="#ee7878"/>
<rect x="1213.1" y="639.7" width="2" height="15.9" fill="#ee7878"/>
<rect x="1205.5" y="608.1" width="17.2" height="31.6" fill="none" stroke="#ee7878" stroke-width="1.9"/>
<rect x="1233.8" y="576.1" width="2" height="1.6" fill="#ee7878"/>
<rect x="1233.8" y="612" width="2" height="21.9" fill="#ee7878"/>
<rect x="1226.2" y="577.7" width="17.2" height="34.3" fill="none" stroke="#ee7878" stroke-width="1.9"/>
<rect x="1254.4" y="556.8" width="2" height="66.7" fill="#7dd0ef"/>
<rect x="1246.4" y="574.3" width="18.5" height="41.1" fill="#7dd0ef"/>
<rect x="1275.1" y="596.7" width="2" height="9.3" fill="#ee7878"/>
<rect x="1275.1" y="613.8" width="2" height="9.7" fill="#ee7878"/>
<rect x="1267.5" y="606" width="17.2" height="7.8" fill="none" stroke="#ee7878" stroke-width="1.9"/>
<rect x="1295.8" y="584.2" width="2" height="20.3" fill="#ee7878"/>
<rect x="1295.8" y="604" width="2" height="33.7" fill="#ee7878"/>
<rect x="1287.2" y="603.5" width="19" height="2" fill="#ee7878"/>
<rect x="1316.4" y="598.2" width="2" height="35.1" fill="#7dd0ef"/>
<rect x="1308.4" y="599" width="18.5" height="26.8" fill="#7dd0ef"/>
<rect x="1337" y="625.8" width="2" height="20" fill="#7dd0ef"/>
<rect x="1329" y="625.8" width="18.5" height="20" fill="#7dd0ef"/>
<rect x="1357.7" y="622.3" width="2" height="3.6" fill="#ee7878"/>
<rect x="1357.7" y="644.2" width="2" height="6" fill="#ee7878"/>
<rect x="1350.1" y="625.9" width="17.2" height="18.3" fill="none" stroke="#ee7878" stroke-width="1.9"/>
<rect x="1378.3" y="614.5" width="2" height="1.3" fill="#ee7878"/>
<rect x="1378.3" y="629.9" width="2" height="7.8" fill="#ee7878"/>
<rect x="1370.8" y="615.8" width="17.2" height="14.1" fill="none" stroke="#ee7878" stroke-width="1.9"/>
<rect x="1399" y="606.5" width="2" height="1.6" fill="#ee7878"/>
<rect x="1399" y="616.5" width="2" height="11.4" fill="#ee7878"/>
<rect x="1391.4" y="608.1" width="17.2" height="8.4" fill="none" stroke="#ee7878" stroke-width="1.9"/>
<rect x="1411.6" y="604.2" width="18.5" height="2" fill="#7dd0ef"/>
<rect x="1460.9" y="883.8" width="2" height="185.8" fill="#7dd0ef"/>
<rect x="1452.9" y="978" width="18.5" height="26" fill="#7dd0ef"/>
<rect x="1481.6" y="926.7" width="2" height="2.6" fill="#ee7878"/>
<rect x="1481.6" y="1007.6" width="2" height="85.9" fill="#ee7878"/>
<rect x="1474" y="929.3" width="17.2" height="78.3" fill="none" stroke="#ee7878" stroke-width="1.9"/>
<rect x="1502.2" y="874" width="2" height="7.8" fill="#ee7878"/>
<rect x="1502.2" y="923" width="2" height="34" fill="#ee7878"/>
<rect x="1494.7" y="881.8" width="17.2" height="41.2" fill="none" stroke="#ee7878" stroke-width="1.9"/>
<rect x="1522.9" y="848" width="2" height="1.7" fill="#ee7878"/>
<rect x="1522.9" y="878" width="2" height="59" fill="#ee7878"/>
<rect x="1515.3" y="849.7" width="17.2" height="28.3" fill="none" stroke="#ee7878" stroke-width="1.9"/>
<rect x="1543.5" y="826.4" width="2" height="100.6" fill="#7dd0ef"/>
<rect x="1535.5" y="848" width="18.5" height="11" fill="#7dd0ef"/>
<rect x="1564.2" y="808.5" width="2" height="19.8" fill="#ee7878"/>
<rect x="1564.2" y="868" width="2" height="21.8" fill="#ee7878"/>
<rect x="1556.6" y="828.3" width="17.2" height="39.7" fill="none" stroke="#ee7878" stroke-width="1.9"/>
<rect x="1584.8" y="819" width="2" height="119.7" fill="#7dd0ef"/>
<rect x="1576.8" y="826.4" width="18.5" height="68.4" fill="#7dd0ef"/>
<rect x="1605.5" y="883.8" width="2" height="7.6" fill="#ee7878"/>
<rect x="1605.5" y="893.8" width="2" height="7.9" fill="#ee7878"/>
<rect x="1597.9" y="891.4" width="17.2" height="2.4" fill="none" stroke="#ee7878" stroke-width="1.9"/>
<rect x="1626.1" y="869" width="2" height="32.7" fill="#7dd0ef"/>
<rect x="1618.1" y="892.7" width="18.5" height="2.1" fill="#7dd0ef"/>
<rect x="1646.8" y="885" width="2" height="84" fill="#7dd0ef"/>
<rect x="1638.8" y="885.9" width="18.5" height="63.1" fill="#7dd0ef"/>
<rect x="1667.4" y="947.8" width="2" height="94.2" fill="#7dd0ef"/>
<rect x="1659.4" y="948.2" width="18.5" height="88.7" fill="#7dd0ef"/>
<rect x="1688.1" y="995.8" width="2" height="47.1" fill="#7dd0ef"/>
<rect x="1680.1" y="1014.6" width="18.5" height="28.3" fill="#7dd0ef"/>
<rect x="1708.8" y="1005.7" width="2" height="3" fill="#ee7878"/>
<rect x="1708.8" y="1038.3" width="2" height="15.6" fill="#ee7878"/>
<rect x="1701.2" y="1008.7" width="17.2" height="29.6" fill="none" stroke="#ee7878" stroke-width="1.9"/>
<rect x="1729.4" y="1002.7" width="2" height="51.2" fill="#7dd0ef"/>
<rect x="1721.4" y="1010" width="18.5" height="21.5" fill="#7dd0ef"/>
<rect x="1750" y="1030" width="2" height="61.4" fill="#7dd0ef"/>
<rect x="1742" y="1030" width="18.5" height="61.4" fill="#7dd0ef"/>
<rect x="1770.7" y="1062" width="2" height="97" fill="#7dd0ef"/>
<rect x="1762.7" y="1085" width="18.5" height="59" fill="#7dd0ef"/>
<rect x="1791.3" y="1118.8" width="2" height="4.8" fill="#ee7878"/>
<rect x="1791.3" y="1146" width="2" height="27.2" fill="#ee7878"/>
<rect x="1783.8" y="1123.6" width="17.2" height="22.4" fill="none" stroke="#ee7878" stroke-width="1.9"/>
<rect x="1812" y="1114.8" width="2" height="44.2" fill="#ee7878"/>
<rect x="1804.4" y="1093.9" width="17.2" height="20.9" fill="none" stroke="#ee7878" stroke-width="1.9"/>
<rect x="1832.6" y="1080" width="2" height="16" fill="#ee7878"/>
<rect x="1832.6" y="1097.8" width="2" height="9.9" fill="#ee7878"/>
<rect x="1824.1" y="1095" width="19" height="3.8" fill="#ee7878"/>
<rect x="1853.3" y="1095" width="2" height="28.8" fill="#7dd0ef"/>
<rect x="1845.3" y="1095" width="18.5" height="11" fill="#7dd0ef"/>
<rect x="1873.9" y="1088" width="2" height="11.8" fill="#ee7878"/>
<rect x="1873.9" y="1102" width="2" height="34.6" fill="#ee7878"/>
<rect x="1866.3" y="1099.8" width="17.2" height="2.2" fill="none" stroke="#ee7878" stroke-width="1.9"/>
<rect x="1894.6" y="1055.4" width="2" height="39.1" fill="#ee7878"/>
<rect x="1887" y="1094.5" width="17.2" height="5.4" fill="none" stroke="#ee7878" stroke-width="1.9"/>
<rect x="1915.2" y="1087.5" width="2" height="1.5" fill="#ee7878"/>
<rect x="1915.2" y="1095.4" width="2" height="21.3" fill="#ee7878"/>
<rect x="1907.6" y="1089" width="17.2" height="6.4" fill="none" stroke="#ee7878" stroke-width="1.9"/>
<rect x="1935.9" y="1088" width="2" height="15.9" fill="#ee7878"/>
<rect x="1928.3" y="1045.3" width="17.2" height="42.7" fill="none" stroke="#ee7878" stroke-width="1.9"/>
<rect x="1956.5" y="1044.3" width="2" height="25.3" fill="#7dd0ef"/>
<rect x="1948.5" y="1044.3" width="18.5" height="2.1" fill="#7dd0ef"/>
<rect x="1977.2" y="1044.3" width="2" height="21.7" fill="#7dd0ef"/>
<rect x="1969.2" y="1050.3" width="18.5" height="15.7" fill="#7dd0ef"/>
<rect x="1997.8" y="1033.9" width="2" height="18" fill="#ee7878"/>
<rect x="1990.2" y="1051.9" width="17.2" height="13.8" fill="none" stroke="#ee7878" stroke-width="1.9"/>
<rect x="2018.5" y="1052.4" width="2" height="39.6" fill="#7dd0ef"/>
<rect x="2010.5" y="1053.3" width="18.5" height="10.4" fill="#7dd0ef"/>
<rect x="2039.1" y="1052.4" width="2" height="29.1" fill="#7dd0ef"/>
<rect x="2031.1" y="1060" width="18.5" height="3.7" fill="#7dd0ef"/>
<rect x="2051.8" y="1063" width="18.5" height="2" fill="#7dd0ef"/>
<rect x="2080.4" y="983.3" width="2" height="78.9" fill="#7dd0ef"/>
<rect x="2072.4" y="1007.7" width="18.5" height="6.9" fill="#7dd0ef"/>
<rect x="2101.1" y="975.9" width="2" height="28.4" fill="#ee7878"/>
<rect x="2093.5" y="1004.3" width="17.2" height="6.3" fill="none" stroke="#ee7878" stroke-width="1.9"/>
<rect x="2121.8" y="976.2" width="2" height="8.7" fill="#ee7878"/>
<rect x="2114.2" y="984.9" width="17.2" height="20.4" fill="none" stroke="#ee7878" stroke-width="1.9"/>
<rect x="2142.4" y="953.3" width="2" height="1.6" fill="#ee7878"/>
<rect x="2142.4" y="978.5" width="2" height="10.5" fill="#ee7878"/>
<rect x="2134.8" y="954.9" width="17.2" height="23.6" fill="none" stroke="#ee7878" stroke-width="1.9"/>
<rect x="2163.1" y="928.6" width="2" height="14.7" fill="#ee7878"/>
<rect x="2163.1" y="950.2" width="2" height="20.9" fill="#ee7878"/>
<rect x="2155.5" y="943.3" width="17.2" height="6.9" fill="none" stroke="#ee7878" stroke-width="1.9"/>
<rect x="2183.7" y="908.6" width="2" height="12.9" fill="#ee7878"/>
<rect x="2183.7" y="935.9" width="2" height="20.4" fill="#ee7878"/>
<rect x="2176.1" y="921.5" width="17.2" height="14.4" fill="none" stroke="#ee7878" stroke-width="1.9"/>
<rect x="2204.3" y="928" width="2" height="19.3" fill="#7dd0ef"/>
<rect x="2196.3" y="935.4" width="18.5" height="2.1" fill="#7dd0ef"/>
<rect x="2225" y="918.5" width="2" height="6" fill="#ee7878"/>
<rect x="2225" y="940.4" width="2" height="26.3" fill="#ee7878"/>
<rect x="2217.4" y="924.5" width="17.2" height="15.9" fill="none" stroke="#ee7878" stroke-width="1.9"/>
<rect x="2245.6" y="892.9" width="2" height="3.9" fill="#ee7878"/>
<rect x="2238" y="896.8" width="17.2" height="23.6" fill="none" stroke="#ee7878" stroke-width="1.9"/>
<rect x="2266.3" y="888.4" width="2" height="1.3" fill="#ee7878"/>
<rect x="2266.3" y="898.1" width="2" height="11.1" fill="#ee7878"/>
<rect x="2258.7" y="889.7" width="17.2" height="8.4" fill="none" stroke="#ee7878" stroke-width="1.9"/>
<rect x="2286.9" y="886.3" width="2" height="20.8" fill="#7dd0ef"/>
<rect x="2278.9" y="891.4" width="18.5" height="3.2" fill="#7dd0ef"/>
<rect x="2307.6" y="898.2" width="2" height="18.8" fill="#7dd0ef"/>
<rect x="2299.6" y="901.2" width="18.5" height="8" fill="#7dd0ef"/>
<rect x="2328.2" y="880.4" width="2" height="21.8" fill="#ee7878"/>
<rect x="2328.2" y="906.1" width="2" height="5.5" fill="#ee7878"/>
<rect x="2320.7" y="902.2" width="17.2" height="3.9" fill="none" stroke="#ee7878" stroke-width="1.9"/>
<rect x="2348.9" y="892.9" width="2" height="26.7" fill="#7dd0ef"/>
<rect x="2340.9" y="893.2" width="18.5" height="26.4" fill="#7dd0ef"/>
<rect x="2369.5" y="916" width="2" height="28.3" fill="#7dd0ef"/>
<rect x="2361.5" y="918.5" width="18.5" height="13" fill="#7dd0ef"/>
<rect x="2390.2" y="908.6" width="2" height="21" fill="#ee7878"/>
<rect x="2390.2" y="930.8" width="2" height="3.7" fill="#ee7878"/>
<rect x="2381.7" y="928.6" width="19" height="3.2" fill="#ee7878"/>
<rect x="2410.8" y="928" width="2" height="46.1" fill="#7dd0ef"/>
<rect x="2402.8" y="928.6" width="18.5" height="45.5" fill="#7dd0ef"/>
<rect x="2431.5" y="962.2" width="2" height="44.1" fill="#7dd0ef"/>
<rect x="2423.5" y="973.5" width="18.5" height="23.5" fill="#7dd0ef"/>
<rect x="2452.1" y="988" width="2" height="2" fill="#ee7878"/>
<rect x="2452.1" y="999" width="2" height="12.3" fill="#ee7878"/>
<rect x="2444.5" y="990" width="17.2" height="9" fill="none" stroke="#ee7878" stroke-width="1.9"/>
<rect x="2472.8" y="988" width="2" height="46.2" fill="#7dd0ef"/>
<rect x="2464.8" y="988.4" width="18.5" height="25.3" fill="#7dd0ef"/>
<rect x="2493.4" y="1009.8" width="2" height="26.8" fill="#7dd0ef"/>
<rect x="2485.4" y="1010.4" width="18.5" height="11.3" fill="#7dd0ef"/>
<rect x="2514.1" y="1012.8" width="2" height="23.8" fill="#7dd0ef"/>
<rect x="2506.1" y="1018.2" width="18.5" height="2" fill="#7dd0ef"/>
<rect x="2534.8" y="997.9" width="2" height="11.4" fill="#ee7878"/>
<rect x="2527.2" y="1009.3" width="17.2" height="10.7" fill="none" stroke="#ee7878" stroke-width="1.9"/>
<rect x="2555.4" y="1000.9" width="2" height="28.3" fill="#7dd0ef"/>
<rect x="2547.4" y="1007.7" width="18.5" height="17.6" fill="#7dd0ef"/>
<rect x="2576" y="1012.8" width="2" height="7.5" fill="#ee7878"/>
<rect x="2576" y="1022.8" width="2" height="14.4" fill="#ee7878"/>
<rect x="2568.4" y="1020.3" width="17.2" height="2.5" fill="none" stroke="#ee7878" stroke-width="1.9"/>
<rect x="2596.7" y="1008.3" width="2" height="13.4" fill="#7dd0ef"/>
<rect x="2588.7" y="1012.2" width="18.5" height="8" fill="#7dd0ef"/>
<rect x="2617.3" y="1000" width="2" height="1.9" fill="#ee7878"/>
<rect x="2617.3" y="1015.7" width="2" height="6" fill="#ee7878"/>
<rect x="2609.8" y="1001.9" width="17.2" height="13.8" fill="none" stroke="#ee7878" stroke-width="1.9"/>
<rect x="2638" y="993.5" width="2" height="20.2" fill="#7dd0ef"/>
<rect x="2630" y="1000.9" width="18.5" height="6.5" fill="#7dd0ef"/>
<rect x="2658.6" y="1006" width="2" height="13.3" fill="#7dd0ef"/>
<rect x="2650.6" y="1008.3" width="18.5" height="4.5" fill="#7dd0ef"/>
<rect x="2679.3" y="1012.8" width="2" height="29.8" fill="#7dd0ef"/>
<rect x="2671.3" y="1014.3" width="18.5" height="28.3" fill="#7dd0ef"/>
</g>
<rect x="28" y="840" width="2681" height="4" fill="#8a4a14" opacity="0.5"/>
<rect x="28" y="959" width="2681" height="4" fill="#8a4a14" opacity="0.5"/>
<polyline points="28.3,1029.7 89.3,1000.5 152.6,969.3 181.8,956.5 238,929 297.5,899.4 357,869.6 388.3,854.7 416.5,842.8 449.9,835.4 491.2,826.5 535.6,817.5 573.6,810 615,804 656.6,800.6 700,797.9 744.6,800.8 863,800.8 884.5,795.5 917,789.5 967.9,783.6 1051,776.7 1095.8,768.7 1164,749.3 1235.7,733 1295,721.7 1354.8,712 1400,706.4 1441.4,701.4 1489.3,707.3 1548.8,710.3 1608,711.2 1647,713.9 1681,719.8 1727,729.6 1772,741.5 1816.7,753.5 1861,765.4 1906,776.7 1929.8,780.2 1995,791.5 2072.6,804 2120,811.5 2198,825.3 2308,840.2 2397.6,855 2445,863 2546.4,886.3 2635.7,907 2701,922.6" fill="none" stroke="#5c5cf2" stroke-width="2.1" stroke-linejoin="round"/>
<polyline points="28.3,906.2 89,904.7 140.7,900.8 161,593 181.8,690 190.5,694.2 223,698 264.6,699.5 305.7,693 327.4,693.6 367.9,698 388.4,707 409,710.8 450,715 511.9,719.8 573.8,720.4 615,717.4 656.8,712.9 700,711.5 789.3,708.6 848.8,706.2 938,705.6 1057,704.7 1164,700.8 1255.4,694.9 1338,691.9 1400,690 1420.8,688 1462,970.7 1471.4,982.6 1486.3,982 1503.6,970 1524,960.3 1544.6,951.4 1565.5,943.3 1586,935.6 1606.8,934.4 1638,932 1659,935.6 1689.3,941.5 1730.6,946 1751,952.9 1772,961.8 1792.8,967.7 1834.5,973.7 1876,977.6 1929.8,981 1995,985 2072.6,987.7 2120,987.3 2198,984.5 2308,981 2397.6,978.6 2516.7,979.5 2635.7,980.7 2701,985" fill="none" stroke="#b9bdc2" stroke-width="1.5" stroke-linejoin="round"/>
<polyline points="28.3,883.9 58,880.9 78.8,874 99,868 120,850.2 140.7,838.4 161,822.6 181.8,817.5 202.6,807 223,799.7 243.7,790.7 264.6,780.3 285,771.4 305.7,761.9 326.8,758.9 347,755 367.9,753 388.4,755 409,757.1 429.3,758 449.9,757.1 470.7,761.9 491.2,764.9 511.8,764 532.6,761 552.8,758.9 573.6,753.6 594.5,744.6 615,739.3 635.8,735 656.6,731.2 677.2,735 698,728.3 700,728.5 729.8,725.5 759.5,727 828,727 863.1,724.6 884.5,722.6 905.4,716.6 926.2,711.5 947,704.7 967.9,699.3 987.2,694.9 1007.7,689.8 1027.4,686.8 1049.1,684.8 1069.6,680 1090.2,677 1111,674.9 1152.4,672.9 1194,670.5 1235.7,666 1276.2,660.1 1296.7,655.6 1358.6,650.2 1399.4,640.7 1433,635 1441.4,634.4 1461.9,647.2 1482.7,656.7 1503.6,664.8 1524.1,672.2 1544.6,679 1565.5,685 1586,694.5 1606.8,704.3 1627.4,714.8 1647.9,728.2 1668.8,744.5 1689.3,760.9 1710.1,776.7 1730.7,792.1 1751.2,813 1772,833.8 1792.9,854.6 1813.7,875.5 1834.5,894.8 1855.4,914.2 1876.2,933.5 1897,952.9 1917.9,972.2 1938.7,991.5 1956.5,1005.5 1998.8,1013.1 2039.9,1028 2081.5,1042.9 2100,1047 2129.8,1053 2165.5,1054.5 2198.2,1047 2228,1041.1 2266.7,1029.2 2308.3,1008.3 2350,993.5 2391.1,980.1 2432.4,972 2473.8,968.2 2515.2,964.3 2556.5,961.3 2597.6,960.1 2639,961.3 2680.4,967.3 2701.2,972.6" fill="none" stroke="#ec8c30" stroke-width="1.8" stroke-linejoin="round"/>
<polyline points="28.3,780.3 78.8,830 99,833.3 120,814.5 140.7,795.2 161,747.6 181.8,744.6 202.6,712.8 223,716.4 243.7,699.5 264.6,713 285,684.6 305.7,687.6 326.8,691.2 347,698 367.9,713 388.4,757.6 409,786.3 429.3,799.7 449.9,811.6 470.7,823.5 491.2,813 511.8,803.5 532.6,792.2 552.8,789.3 573.6,767 594.5,735.7 615,709 635.8,678.7 656.6,660.8 677.2,654.3 698,654.9 729.8,658 747.6,661.5 780.4,680.9 819,682.4 842.9,685.4 863.1,688.9 883,686.8 905.4,700.8 926.2,702.6 947,701.7 967.9,690.7 987.2,686.2 1007.7,678.8 1027.4,682.4 1049.1,683.3 1069.6,678.8 1090.2,670.5 1111,663 1131.5,645.2 1152.4,633.3 1172.9,629.7 1193.5,627.9 1214.3,619.9 1234.8,616.3 1255.4,613.9 1276.2,606.5 1296.7,601.4 1317.3,605 1338.1,617.5 1358.6,619.9 1379.2,622.9 1400,622.9 1433,615.1 1441.4,611.5 1461.9,688 1482.7,750.5 1503.6,801.1 1524.1,853.2 1544.6,903.8 1565.5,869.5 1586,863 1606.8,864.2 1627.4,871.9 1647.9,888.9 1668.8,935.6 1689.3,968.3 1710.1,991.5 1730.7,1011.6 1751.2,1038.4 1772,1062.2 1792.9,1080.1 1813.1,1096.4 1833.9,1109.8 1854.5,1111.9 1875,1105.4 1895.5,1100 1916.4,1096.4 1936.9,1087.5 1957.4,1074.1 1978.3,1066.7 1998.8,1059.2 2019.3,1055.4 2039.9,1059.2 2060.7,1062.2 2081.5,1051.8 2100,1041.1 2102.1,1039.9 2122.6,1021.7 2143.5,1002.4 2164,978.6 2184.8,960.7 2205.4,947.3 2225.9,935.4 2246.7,922 2267.3,912.5 2288.1,907.1 2308.6,902.1 2329.2,898.2 2350,901.8 2370.5,910.7 2391.1,917.6 2411.9,931 2432.4,948.8 2453.3,962.2 2473.8,978.6 2494.3,997.9 2515.2,1006 2535.7,1009.8 2556.5,1016.7 2577.1,1017.3 2597.6,1016.7 2618.5,1013.7 2639,1012.8 2659.5,1011.9 2680.4,1017.3 2701.2,1021.7" fill="none" stroke="#96e464" stroke-width="1.5" stroke-linejoin="round"/>
<polyline points="28.6,1495.2 59.5,1502 99.2,1507.9 140.8,1505.9 160.7,1500.8 202.3,1496.8 244,1494 285.6,1490.9 305.4,1490.1 347.1,1494.8 366.9,1499.2 387.9,1506.7 408.6,1513.9 428.4,1519.8 449,1523.8 470.1,1528.9 490.7,1532.9 511.7,1534.5 531.5,1533.7 552.2,1532.5 573.2,1530.9 593.8,1525 614.8,1519.8 634.7,1513.9 655.3,1509.1 676.3,1505.1 696.9,1502.8 718,1500.8 738.6,1500 759.6,1502 780.2,1505.1 801.3,1505.9 821.9,1507.1 842.9,1508.7 863.5,1511.9 884.6,1514.7 905.2,1517.8 926.2,1518.6 940,1519.8 1019.3,1520.6 1059,1520.6 1098.7,1517.8 1138.3,1512.7 1178,1511.1 1217.7,1509.9 1257.3,1506.7 1297,1507.1 1336.7,1510.7 1376.3,1513.1 1412,1514.7 1441.8,1515.1 1462.4,1527.8 1483.4,1543.6 1503.3,1555.5 1525.1,1565.4 1544.9,1571.4 1565.9,1574.6 1586.6,1577.3 1607.6,1580.5 1628.2,1582.1 1648.8,1584.5 1669.9,1590 1689.7,1594.4 1711.5,1598 1731.4,1600.3 1752.4,1604.3 1773,1609.1 1792.8,1611.1 1814.7,1611.8 1834.5,1610.3 1856.3,1609.1 1876.1,1606.3 1880,1606.3 1921.3,1596.8 1962.6,1585.6 2004,1574.9 2045.3,1564.5 2072.1,1558.3 2103.1,1549.3 2144.5,1536.9 2185.8,1523.6 2227.1,1512.9 2268.4,1504.6 2309.8,1500.5 2351.1,1500.9 2392.4,1504.6 2433.7,1512.9 2475,1521.2 2516.4,1530.7 2557.7,1536 2582.5,1538.9 2619.7,1540.2 2661,1539.3 2701.1,1541.8" fill="none" stroke="#ec8c30" stroke-width="1.8" stroke-linejoin="round"/>
<polyline points="28.6,1506.7 39.7,1513.9 59.5,1517.8 79.3,1519.8 99.2,1519 119,1505.9 140.8,1504 160.7,1477 181.7,1497.2 202.3,1484.9 222.9,1492.8 244,1489.3 263.8,1485.3 285.6,1484.9 305.4,1486.1 326.1,1502.8 347.1,1505.9 366.9,1513.9 387.9,1537.7 408.6,1544.8 428.4,1546.4 449,1542.4 470.1,1546.4 490.7,1545.6 511.7,1537.7 531.5,1532.5 552.2,1529.7 573.2,1519.8 593.8,1504 614.8,1496 634.7,1489.3 655.3,1488.9 676.3,1491.3 696.9,1494.8 718,1496 738.6,1500 759.6,1509.1 780.2,1514.7 801.3,1510.7 821.9,1511.9 842.9,1513.9 863.5,1522.6 884.6,1523.8 905.2,1528.9 926.2,1523.8 940,1521 946.8,1520.6 979.7,1519.8 1019.3,1522.6 1059,1519.8 1090.7,1511.1 1110.6,1511.1 1132.4,1503.2 1154.2,1505.1 1178,1507.9 1213.7,1505.9 1235.5,1500 1257.3,1504 1297,1505.9 1336.7,1517.8 1368.4,1519.8 1412,1517 1441.8,1515.9 1462.4,1577.3 1483.4,1601.1 1503.3,1607.1 1525.1,1601.9 1544.9,1598.4 1565.9,1588.4 1586.6,1592.4 1607.6,1591.2 1628.2,1588.4 1648.8,1595.2 1669.9,1609.1 1689.7,1615.8 1711.5,1611.8 1731.4,1610.3 1752.4,1616.2 1773,1624.1 1792.8,1623 1814.7,1614.2 1834.5,1607.1 1856.3,1600.3 1876.1,1594 1880,1593.9 1917.2,1581.5 1937.9,1568.7 1958.5,1559.6 1979.2,1556.3 1999.8,1551.3 2020.5,1549.3 2041.2,1547.2 2061.8,1545.1 2082.5,1534.8 2103.1,1527.8 2123.8,1520.3 2144.5,1510.8 2165.1,1504.6 2185.8,1498.8 2206.4,1498.4 2227.1,1496.4 2247.8,1492.2 2268.4,1490.2 2289.1,1490.2 2309.8,1494.7 2330.4,1497.6 2351.1,1501.7 2371.7,1507.1 2392.4,1512.1 2413.1,1520.3 2433.7,1530.7 2454.4,1534.8 2475,1541.8 2495.7,1546 2516.4,1546.4 2537,1546 2557.7,1546.4 2578.3,1546.4 2599,1545.1 2619.7,1541 2640.3,1540.2 2661,1541 2681.7,1543.9 2701.1,1545.1" fill="none" stroke="#96e464" stroke-width="1.5" stroke-linejoin="round"/>
<line x1="28" y1="1622.5" x2="2709" y2="1622.5" stroke="#b8b8b8" stroke-width="1.6" stroke-dasharray="2 3" shape-rendering="crispEdges"/>
<rect x="28" y="1042" width="2690" height="2.4" fill="#f6e8d4"/>
<rect x="12" y="1266" width="2856" height="2" fill="#b8b8b8"/>
<rect x="12" y="1401.6" width="2856" height="2" fill="#b8b8b8"/>
<line x1="1263" y1="1058" x2="1468" y2="966.5" stroke="#f0f0f0" stroke-width="2.4"/>
<circle cx="1472.5" cy="964.5" r="5.5" fill="none" stroke="#e8e8e8" stroke-width="1.8"/>
<rect x="1118" y="1058" width="144.5" height="138.5" fill="#fff"/>
<circle cx="1117" cy="1057.5" r="5.8" fill="none" stroke="#a8a8a8" stroke-width="1.8"/>
<circle cx="1190.5" cy="1057" r="5.8" fill="none" stroke="#a8a8a8" stroke-width="1.8"/>
<circle cx="1263" cy="1057.5" r="5.8" fill="none" stroke="#a8a8a8" stroke-width="1.8"/>
<circle cx="1116.5" cy="1127.5" r="5.8" fill="none" stroke="#a8a8a8" stroke-width="1.8"/>
<circle cx="1263" cy="1127.5" r="5.8" fill="none" stroke="#a8a8a8" stroke-width="1.8"/>
<circle cx="1117" cy="1197.5" r="5.8" fill="none" stroke="#a8a8a8" stroke-width="1.8"/>
<circle cx="1190.5" cy="1198" r="5.8" fill="none" stroke="#a8a8a8" stroke-width="1.8"/>
<circle cx="1263" cy="1197.5" r="5.8" fill="none" stroke="#a8a8a8" stroke-width="1.8"/>
<path d="M2708.5 1043 L2722.5 1024.5 H2840 V1061.5 H2722.5 Z" fill="#ebe1cf"/>
<rect x="2722.5" y="1024.5" width="117.5" height="2" fill="#8a8378"/>
<rect x="2705.8" y="1602" width="86" height="37.8" fill="#dedede"/>
</svg>
<svg style="left:24px;top:19.5px" width="22" height="23" viewBox="0 0 22 23"><path d="M2 3.5L8 0L10.5 4.5L13.5 6.5L16 5.5L22 11L17 13L20 22L15 22L13 18L9 22L6 22L8.5 14L6 9L2 8Z" fill="#e2b607"/></svg>
<div class="t j" style="left:56.54px;top:15.84px;width:341.39px;font-size:31.32px;color:#fff;transform:scaleX(0.93);transform-origin:0 0;font-weight:bold;">マルチツール(個別銘柄)</div>
<div class="t" style="left:386.23px;top:17.77px;font-size:32.17px;color:#fff;letter-spacing:0.61px;transform:scaleX(1.22);transform-origin:0 0;font-weight:bold;">9308</div>
<div class="t j" style="left:483.45px;top:15.84px;width:97.09px;font-size:31.32px;color:#fff;transform:scaleX(0.99);transform-origin:0 0;font-weight:bold;">乾汽船</div>
<div class="t j" style="left:588.58px;top:15.84px;width:34.45px;font-size:31.32px;color:#fff;transform:scaleX(0.91);transform-origin:0 0;font-weight:bold;">東</div>
<div class="t" style="left:630.55px;top:17.77px;font-size:32.17px;color:#fff;font-weight:bold;">1</div>
<svg style="left:2510px;top:17.5px" width="26" height="25" viewBox="0 0 26 25"><g transform="rotate(-35 13 12.5)" fill="none" stroke="#ee1010" stroke-width="3.2"><rect x="1.5" y="8" width="13" height="9" rx="4.5"/><rect x="11.5" y="8" width="13" height="9" rx="4.5"/></g></svg>
<div class="t" style="left:2535px;top:32.5px;font-size:18.5px;color:#f4f4f4">1</div>
<svg style="left:2570px;top:15px" width="31" height="32" viewBox="0 0 31 32"><circle cx="14" cy="14" r="10.8" fill="none" stroke="#d0d0d0" stroke-width="3"/><path d="M21 22.5L27.5 29" stroke="#d0d0d0" stroke-width="4.4" stroke-linecap="round"/></svg>
<svg style="left:2636px;top:20px" width="23" height="21" viewBox="0 0 23 21"><rect x="0" y="0" width="22.5" height="2.2" fill="#ececec"/><rect x="0" y="6" width="22.5" height="2.2" fill="#ececec"/><rect x="0" y="12.2" width="22.5" height="2.2" fill="#ececec"/><rect x="0" y="18.3" width="22.5" height="2.2" fill="#ececec"/></svg>
<div class="b" style="left:2690px;top:6px;width:60px;height:36px;background:linear-gradient(#4e4e4e,#444)"></div>
<div class="b" style="left:2752px;top:6px;width:60px;height:36px;background:linear-gradient(#4e4e4e,#444)"></div>
<div class="b" style="left:2814px;top:6px;width:60px;height:36px;background:linear-gradient(#682020,#5e1a1a)"></div>
<div class="b" style="left:2708px;top:25.5px;width:18px;height:4.5px;background:#dcdcdc"></div>
<svg style="left:2767px;top:11.5px" width="29" height="25" viewBox="0 0 29 25"><rect x="10.5" y="1" width="17" height="14.5" fill="none" stroke="#dcdcdc" stroke-width="2"/><rect x="1" y="9.5" width="18.5" height="14" fill="#494949" stroke="#dcdcdc" stroke-width="2"/></svg>
<svg style="left:2834px;top:14.5px" width="20" height="20" viewBox="0 0 20 20"><path d="M1.5 1.5L18.5 18.5M18.5 1.5L1.5 18.5" stroke="#dcdcdc" stroke-width="3.2"/></svg>
<div class="b" style="left:12px;top:63.5px;width:124px;height:44.5px;background:#232323;border-radius:4px 4px 0 0;"></div>
<div class="t j" style="left:47.78px;top:74.32px;width:53.14px;font-size:24.36px;color:#b4b4b4;">市況</div>
<div class="b" style="left:140px;top:63.5px;width:124px;height:44.5px;background:#3b5a93;border-radius:4px 4px 0 0;"></div>
<div class="t j" style="left:161.02px;top:74.32px;width:99.88px;font-size:24.36px;color:#fff;transform:scaleX(0.81);transform-origin:0 0;">チャート</div>
<div class="b" style="left:268px;top:63.5px;width:124px;height:44.5px;background:#232323;border-radius:4px 4px 0 0;"></div>
<div class="t j" style="left:291.78px;top:74.32px;width:77.74px;font-size:24.36px;color:#b4b4b4;">歩み値</div>
<div class="b" style="left:396px;top:63.5px;width:124px;height:44.5px;background:#232323;border-radius:4px 4px 0 0;"></div>
<div class="t j" style="left:417.01px;top:74.32px;width:99.88px;font-size:24.36px;color:#b4b4b4;transform:scaleX(0.82);transform-origin:0 0;">ニュース</div>
<div class="b" style="left:524px;top:63.5px;width:124px;height:44.5px;background:#232323;border-radius:4px 4px 0 0;"></div>
<div class="t j" style="left:546.28px;top:74.32px;width:77.34px;font-size:24.36px;color:#b4b4b4;">時系列</div>
<div class="b" style="left:652px;top:63.5px;width:124px;height:44.5px;background:#232323;border-radius:4px 4px 0 0;"></div>
<div class="t j" style="left:660.28px;top:74.32px;width:106.54px;font-size:24.36px;color:#b4b4b4;">適時開示</div>
<div class="b" style="left:780px;top:63.5px;width:124px;height:44.5px;background:#232323;border-radius:4px 4px 0 0;"></div>
<div class="t j" style="left:800.78px;top:74.32px;width:79.64px;font-size:24.36px;color:#b4b4b4;">四季報</div>
<div class="b" style="left:908px;top:63.5px;width:124px;height:44.5px;background:#232323;border-radius:4px 4px 0 0;"></div>
<div class="t j" style="left:916.08px;top:74.32px;width:106.54px;font-size:24.36px;color:#b4b4b4;">株主優待</div>
<div class="b" style="left:1036px;top:63.5px;width:124px;height:44.5px;background:#232323;border-radius:4px 4px 0 0;"></div>
<div class="t j" style="left:1070.78px;top:74.32px;width:54.74px;font-size:24.36px;color:#b4b4b4;">業績</div>
<div class="b" style="left:1164px;top:63.5px;width:124px;height:44.5px;background:#232323;border-radius:4px 4px 0 0;"></div>
<div class="t j" style="left:1198.78px;top:74.32px;width:54.64px;font-size:24.36px;color:#b4b4b4;">指標</div>
<div class="b" style="left:1292px;top:63.5px;width:124px;height:44.5px;background:#232323;border-radius:4px 4px 0 0;"></div>
<div class="t j" style="left:1299.78px;top:74.32px;width:106.44px;font-size:24.36px;color:#b4b4b4;">業績予測</div>
<div class="b" style="left:20px;top:120.5px;width:149.5px;height:43px;background:#000;box-sizing:border-box;border:2px solid #5a5a5a;"></div>
<div class="t" style="left:32.34px;top:130.64px;font-size:25.73px;color:#fff;">5</div>
<div class="t j" style="left:48.8px;top:131.62px;width:51.16px;font-size:24.36px;color:#fff;transform:scaleX(0.99);transform-origin:0 0;">分足</div>
<svg style="left:147px;top:138.5px" width="12" height="7" viewBox="0 0 12 7"><path d="M0 0H12L6 7Z" fill="#e8e8e8"/></svg>
<div class="b" style="left:182px;top:122px;width:120px;height:40px;background:#3b5a93;"></div>
<div class="t j" style="left:189.12px;top:130.9px;width:107.01px;font-size:26.1px;color:#fff;transform:scaleX(0.98);transform-origin:0 0;">表示期間</div>
<div class="b" style="left:316px;top:122px;width:120px;height:40px;background:linear-gradient(#4b4b4b,#404040);"></div>
<div class="t j" style="left:324.82px;top:131.82px;width:124.24px;font-size:24.36px;color:#e8e8e8;transform:scaleX(0.81);transform-origin:0 0;">テクニカル</div>
<div class="b" style="left:450px;top:122px;width:104px;height:40px;background:#3b5a93;"></div>
<div class="t j" style="left:474.7px;top:130.9px;width:54.81px;font-size:26.1px;color:#fff;">通常</div>
<div class="b" style="left:556px;top:122px;width:104px;height:40px;background:linear-gradient(#4b4b4b,#404040);"></div>
<div class="t j" style="left:567px;top:130.9px;width:80.91px;font-size:26.1px;color:#e8e8e8;transform:scaleX(0.99);transform-origin:0 0;">指数化</div>
<div class="b" style="left:662px;top:122px;width:104px;height:40px;background:linear-gradient(#4b4b4b,#404040);"></div>
<div class="t j" style="left:665.04px;top:131.82px;width:124.24px;font-size:24.36px;color:#e8e8e8;transform:scaleX(0.78);transform-origin:0 0;">スプレッド</div>
<div class="b" style="left:780px;top:122px;width:40px;height:40px;background:#3c5a92"><svg style="left:0;top:0" width="40" height="40" viewBox="0 0 40 40"><rect x="19.7" y="8" width="2.4" height="26" fill="#fff"/><rect x="8" y="20" width="26" height="2.4" fill="#fff"/></svg></div>
<div class="b" style="left:834px;top:122px;width:40px;height:40px;background:linear-gradient(#575757,#474747)"><svg style="left:0;top:0" width="40" height="40" viewBox="0 0 40 40"><circle cx="20" cy="18" r="12.6" fill="none" stroke="#d4d4d4" stroke-width="2.6"/><path d="M28.5 27.5L33.5 33" stroke="#d4d4d4" stroke-width="4" stroke-linecap="round"/><rect x="13" y="16.3" width="14" height="3.6" fill="#d4d4d4"/><rect x="18.2" y="11" width="3.6" height="14" fill="#d4d4d4"/></svg></div>
<div class="b" style="left:880px;top:122px;width:40px;height:40px;background:linear-gradient(#545454,#474747)"><svg style="left:0;top:0" width="40" height="40" viewBox="0 0 40 40"><circle cx="20" cy="18" r="12.6" fill="none" stroke="#767676" stroke-width="2.6"/><path d="M28.5 27.5L33.5 33" stroke="#767676" stroke-width="4" stroke-linecap="round"/><rect x="13" y="16.3" width="14" height="3.6" fill="#767676"/></svg></div>
<div class="b" style="left:934px;top:122px;width:40px;height:40px;background:#3c5a92"><svg style="left:0;top:0" width="40" height="40" viewBox="0 0 40 40"><g transform="rotate(-40 20 20)"><rect x="8" y="15.5" width="27" height="9.5" fill="#e6ebf5"/><path d="M8 15.5L1 20.2L8 25Z" fill="#fff"/><path d="M8 18.6H35M8 21.8H35" stroke="#8296c0" stroke-width="1"/></g></svg></div>
<div class="b" style="left:988px;top:122px;width:40px;height:40px;background:#3c5a92"><svg style="left:0;top:0" width="40" height="40" viewBox="0 0 40 40"><path d="M10.5 10L20 22L29.5 10" fill="none" stroke="#fff" stroke-width="4"/><rect x="18" y="21" width="4" height="13" fill="#fff"/><rect x="10" y="22.6" width="20" height="2.6" fill="#fff"/><rect x="10" y="27" width="20" height="2.6" fill="#fff"/></svg></div>
<div class="b" style="left:1042px;top:122px;width:40px;height:40px;background:linear-gradient(#575757,#474747)"><svg style="left:0;top:0" width="40" height="40" viewBox="0 0 40 40"><circle cx="19.8" cy="20" r="12" fill="#dcdcdc"/><rect x="17.8" y="17.5" width="4.2" height="10.5" fill="#3c3c3c"/><rect x="17.8" y="11.5" width="4.2" height="4" fill="#3c3c3c"/></svg></div>
<div class="b" style="left:1096px;top:122px;width:40px;height:40px;background:linear-gradient(#575757,#474747)"><svg style="left:0;top:0" width="40" height="40" viewBox="0 0 40 40"><text x="3.6" y="16" font-family="Liberation Sans" font-weight="bold" font-size="13.5" fill="#d8d8d8" letter-spacing="0.6">MY</text><rect x="14" y="21.5" width="6" height="8.2" fill="#e2e2e2"/><rect x="16" y="18" width="2" height="15.6" fill="#e2e2e2"/><rect x="22" y="23.7" width="6" height="8" fill="#e2e2e2"/><rect x="24" y="20" width="2" height="16" fill="#e2e2e2"/><rect x="30" y="19.6" width="6" height="8.1" fill="#e2e2e2"/><rect x="32" y="16" width="2" height="16" fill="#e2e2e2"/></svg></div>
<div class="b" style="left:1150px;top:122px;width:40px;height:40px;background:linear-gradient(#575757,#474747)"><svg style="left:0;top:0" width="40" height="40" viewBox="0 0 40 40"><path d="M3.97 28.07L3.97 20.33L8.43 19.84L11.41 16.36L14.38 17.85L18.84 12.1L22.31 16.07L25.29 16.86L28.76 13.88L32.73 18.84L35.21 16.36L36.2 28.07Z" fill="#e0e0e0"/></svg></div>
<div class="b" style="left:1204px;top:122px;width:40px;height:40px;background:linear-gradient(#575757,#474747)"><svg style="left:0;top:0" width="40" height="40" viewBox="0 0 40 40"><g transform="rotate(-39 20 20)"><rect x="2.5" y="15.6" width="25" height="8.8" rx="3.2" fill="#d8d8d8"/><path d="M24 11.5H31.5L35 14.5H29.5V25.5H35L31.5 28.5H24Q21 20 24 11.5Z" fill="#d8d8d8"/><rect x="6" y="18.4" width="5.5" height="3.2" rx="1" fill="#4e4e4e"/><rect x="13.5" y="18.4" width="5.5" height="3.2" rx="1" fill="#4e4e4e"/></g></svg></div>
<div class="b" style="left:1272px;top:122px;width:40px;height:40px;background:linear-gradient(#575757,#474747)"><svg style="left:0;top:0" width="40" height="40" viewBox="0 0 40 40"><rect x="11.4" y="9" width="17.6" height="13" fill="none" stroke="#e4e4e4" stroke-width="2.2"/><rect x="6" y="20" width="28" height="12.2" fill="#e4e4e4"/><rect x="10" y="26.2" width="20.4" height="2.2" fill="#444"/><rect x="8" y="22.4" width="3.4" height="1.6" fill="#444"/><path d="M23 9L29 14.5H23Z" fill="#e4e4e4"/></svg></div>
<div class="t j" style="left:21.02px;top:187.36px;width:109.39px;font-size:26.68px;color:#fff;transform:scaleX(0.96);transform-origin:0 0;">表示期間</div>
<div class="b" style="left:138px;top:176.5px;width:153.5px;height:43px;background:#000;box-sizing:border-box;border:2px solid #5a5a5a;"></div>
<div class="t j" style="left:149.01px;top:187.36px;width:109.39px;font-size:26.68px;color:#fff;transform:scaleX(0.97);transform-origin:0 0;">本数指定</div>
<svg style="left:268px;top:194.5px" width="13" height="7" viewBox="0 0 13 7"><path d="M0 0H13L6.5 7Z" fill="#e8e8e8"/></svg>
<div class="t j" style="left:302.71px;top:187.36px;width:56.03px;font-size:26.68px;color:#fff;transform:scaleX(0.96);transform-origin:0 0;">本数</div>
<div class="b" style="left:368px;top:178.5px;width:83.5px;height:39px;background:#000;box-sizing:border-box;border:2px solid #5a5a5a;"></div>
<div class="t" style="left:400.43px;top:187.54px;font-size:23.08px;color:#fff;letter-spacing:0.07px;transform:scaleX(1.22);transform-origin:0 0;">130</div>
<div class="b" style="left:454px;top:178.5px;width:28px;height:39px;background:linear-gradient(#4b4b4b,#404040);"></div>
<div class="b" style="left:484px;top:178.5px;width:28px;height:39px;background:linear-gradient(#4b4b4b,#404040);"></div>
<svg style="left:461px;top:193px" width="14" height="10" viewBox="0 0 14 10"><path d="M0 0H14L7 10Z" fill="#ccc"/></svg>
<svg style="left:491px;top:193px" width="14" height="10" viewBox="0 0 14 10"><path d="M0 10H14L7 0Z" fill="#ccc"/></svg>
<div class="t j" style="left:522.93px;top:187.36px;width:109.39px;font-size:26.68px;color:#fff;transform:scaleX(0.95);transform-origin:0 0;">表示期間</div>
<div class="t" style="left:633.18px;top:194.27px;font-size:18.18px;color:#fff;">:</div>
<div class="t" style="left:667.88px;top:189.19px;font-size:24.06px;color:#fff;letter-spacing:0.43px;transform:scaleX(1.22);transform-origin:0 0;">2021/09/16 14:35</div>
<div class="t" style="left:911.5px;top:179.5px;font-size:42px;color:#fff;transform:scaleY(0.8)">~</div>
<div class="t" style="left:946.28px;top:189.19px;font-size:24.06px;color:#fff;letter-spacing:0.41px;transform:scaleX(1.22);transform-origin:0 0;">2021/09/21 15:00</div>
<div class="b" style="left:1196px;top:178px;width:40px;height:40px;background:linear-gradient(#4b4b4b,#404040);"></div>
<svg style="left:1196px;top:178px" width="40" height="40" viewBox="0 0 40 40"><path d="M9 13.5H26C30 13.5 30 24.5 26 24.5H14" fill="none" stroke="#e0e0e0" stroke-width="4"/><path d="M15.5 18L8 24.5L15.5 31Z" fill="#e0e0e0"/></svg>
<div class="b" style="left:22px;top:242px;width:40px;height:40px;background:linear-gradient(#575757,#474747)"><svg style="left:0;top:0" width="40" height="40" viewBox="0 0 40 40"><path d="M6.7 33.9L33.5 9.4" stroke="#dedede" stroke-width="2" fill="none" stroke-width="2.4"/></svg></div>
<div class="b" style="left:76px;top:242px;width:40px;height:40px;background:linear-gradient(#575757,#474747)"><svg style="left:0;top:0" width="40" height="40" viewBox="0 0 40 40"><g transform="rotate(-38 20 20)"><rect x="3" y="15" width="34" height="10" fill="#cfcfcf"/><path d="M6 18H35M6 22H35" stroke="#5a5a5a" stroke-width="1.3" stroke-dasharray="2 2"/></g></svg></div>
<div class="b" style="left:130px;top:242px;width:40px;height:40px;background:linear-gradient(#575757,#474747)"><svg style="left:0;top:0" width="40" height="40" viewBox="0 0 40 40"><rect x="6.2" y="10.1" width="27.8" height="2.2" fill="#dedede"/><rect x="6.2" y="19.9" width="27.8" height="2.2" fill="#dedede"/><rect x="6.2" y="30.1" width="27.8" height="2.2" fill="#dedede"/></svg></div>
<div class="b" style="left:184px;top:242px;width:40px;height:40px;background:linear-gradient(#575757,#474747)"><svg style="left:0;top:0" width="40" height="40" viewBox="0 0 40 40"><rect x="6.2" y="8.3" width="27.8" height="2.2" fill="#dedede"/><rect x="6.2" y="14.3" width="27.8" height="2.2" fill="#dedede"/><rect x="6.2" y="20.1" width="27.8" height="2.2" fill="#dedede"/><rect x="6.2" y="26.1" width="27.8" height="2.2" fill="#dedede"/><rect x="6.2" y="32.1" width="27.8" height="2.2" fill="#dedede"/></svg></div>
<div class="b" style="left:238px;top:242px;width:40px;height:40px;background:linear-gradient(#575757,#474747)"><svg style="left:0;top:0" width="40" height="40" viewBox="0 0 40 40"><path d="M4.3 30.6A15.6 15.6 0 0 1 35.5 30.6M8.9 30.6A11 11 0 0 1 30.9 30.6M13.2 30.6A6.7 6.7 0 0 1 26.6 30.6" stroke="#cfcfcf" stroke-width="1.8" fill="none"/><path d="M17 30.6L35 12.5" stroke="#cfcfcf" stroke-width="1.8"/></svg></div>
<div class="b" style="left:292px;top:242px;width:40px;height:40px;background:linear-gradient(#575757,#474747)"><svg style="left:0;top:0" width="40" height="40" viewBox="0 0 40 40"><path d="M4.9 4.9V35.7H35.5" stroke="#dedede" stroke-width="2" fill="none" stroke-width="2.4"/><path d="M4.9 35.7L21 6.5M4.9 35.7L33.2 9.4M4.9 35.7L33.2 22.8" stroke="#cfcfcf" stroke-width="2"/></svg></div>
<div class="b" style="left:346px;top:242px;width:40px;height:40px;background:linear-gradient(#575757,#474747)"><svg style="left:0;top:0" width="40" height="40" viewBox="0 0 40 40"><rect x="5.7" y="6.5" width="2.8" height="28" fill="#dedede"/><rect x="11.3" y="6.5" width="2.8" height="28" fill="#dedede"/><rect x="17.7" y="6.5" width="2" height="28" fill="#dedede"/><rect x="24" y="6.5" width="2" height="28" fill="#dedede"/><rect x="31.8" y="6.5" width="2" height="28" fill="#dedede"/></svg></div>
<div class="b" style="left:400px;top:242px;width:40px;height:40px;background:linear-gradient(#575757,#474747)"><svg style="left:0;top:0" width="40" height="40" viewBox="0 0 40 40"><path d="M6.7 34.4L21.2 4.9M6.7 34.4L35.3 7.1M6.7 34.4L35.3 21.2" stroke="#cfcfcf" stroke-width="2"/></svg></div>
<div class="b" style="left:454px;top:242px;width:40px;height:40px;background:linear-gradient(#575757,#474747)"><svg style="left:0;top:0" width="40" height="40" viewBox="0 0 40 40"><path d="M19.6 6.5L34.1 17.6L28.6 33.5H10.3L5.1 17.6Z" stroke="#dedede" stroke-width="2" fill="none"/></svg></div>
<div class="b" style="left:508px;top:242px;width:40px;height:40px;background:linear-gradient(#575757,#474747)"><svg style="left:0;top:0" width="40" height="40" viewBox="0 0 40 40"><circle cx="19.9" cy="20.1" r="13.2" stroke="#dedede" stroke-width="2" fill="none"/></svg></div>
<div class="b" style="left:562px;top:242px;width:40px;height:40px;background:linear-gradient(#575757,#474747)"><svg style="left:0;top:0" width="40" height="40" viewBox="0 0 40 40"><rect x="7.2" y="9.7" width="26" height="21.4" stroke="#dedede" stroke-width="2" fill="none"/></svg></div>
<div class="b" style="left:616px;top:242px;width:40px;height:40px;background:linear-gradient(#575757,#474747)"><svg style="left:0;top:0" width="40" height="40" viewBox="0 0 40 40"><rect x="4.2" y="18.3" width="32" height="2.2" fill="#dedede"/></svg></div>
<div class="b" style="left:670px;top:242px;width:40px;height:40px;background:linear-gradient(#575757,#474747)"><svg style="left:0;top:0" width="40" height="40" viewBox="0 0 40 40"><text x="20" y="32.3" text-anchor="middle" font-family="Liberation Sans" font-weight="bold" font-size="33" fill="#e0e0e0">A</text></svg></div>
<div class="b" style="left:724px;top:242px;width:40px;height:40px;background:linear-gradient(#575757,#474747)"><svg style="left:0;top:0" width="40" height="40" viewBox="0 0 40 40"><circle cx="19.6" cy="14.3" r="10" fill="#dcdcdc"/><circle cx="16" cy="12" r="1.5" fill="#444"/><circle cx="23.2" cy="12" r="1.5" fill="#444"/><path d="M14.5 17.5Q19.6 22 24.7 17.5" stroke="#444" stroke-width="1.6" fill="none"/><text x="20.5" y="36.6" text-anchor="middle" font-family="Liberation Sans" font-weight="bold" font-size="10.5" fill="#e6e6e6" letter-spacing="0.4">ICON</text></svg></div>
<div class="b" style="left:778px;top:242px;width:40px;height:40px;background:linear-gradient(#575757,#474747)"><svg style="left:0;top:0" width="40" height="40" viewBox="0 0 40 40"><circle cx="14.7" cy="15" r="9" fill="#dcdcdc"/><path d="M14.7 8.5V15H20" stroke="#444" stroke-width="1.8" fill="none"/><path d="M32.6 20.5V30.5H23" stroke="#e0e0e0" stroke-width="3.2" fill="none"/><path d="M24.5 25.5L18.5 30.5L24.5 35.5Z" fill="#e0e0e0"/></svg></div>
<div class="b" style="left:832px;top:242px;width:40px;height:40px;background:linear-gradient(#575757,#474747)"><svg style="left:0;top:0" width="40" height="40" viewBox="0 0 40 40"><rect x="9.7" y="10.4" width="15" height="14.6" fill="#4d4d4d" stroke="#e0e0e0" stroke-width="2"/><path d="M12.5 14.5H22M12.5 18H22" stroke="#e0e0e0" stroke-width="1.6"/><rect x="18" y="18.2" width="15" height="14.8" fill="#4d4d4d" stroke="#e0e0e0" stroke-width="2"/><path d="M21 22.3H30.3M21 25.6H30.3M21 29H30.3" stroke="#e0e0e0" stroke-width="1.6"/></svg></div>
<div class="b" style="left:886px;top:242px;width:40px;height:40px;background:linear-gradient(#545454,#474747)"><svg style="left:0;top:0" width="40" height="40" viewBox="0 0 40 40"><rect x="7.2" y="7.6" width="18.5" height="19.5" fill="none" stroke="#747474" stroke-width="2"/><path d="M19 22L22 19.5L24 23V15.5H26.5V14H29V15.5H31.5V17H34.5V27L32 33H24Z" fill="#767676"/></svg></div>
<div class="b" style="left:940px;top:242px;width:40px;height:40px;background:linear-gradient(#575757,#474747)"><svg style="left:0;top:0" width="40" height="40" viewBox="0 0 40 40"><g transform="rotate(-40 20 20.5)"><rect x="7" y="14.25" width="26" height="12.5" fill="none" stroke="#dedede" stroke-width="2.2"/><rect x="7" y="14.25" width="7" height="12.5" fill="#dedede"/><path d="M15 23.75H32" stroke="#bdbdbd" stroke-width="1.2" stroke-dasharray="1.6 1.6"/></g></svg></div>
<div class="b" style="left:994px;top:242px;width:40px;height:40px;background:linear-gradient(#575757,#474747)"><svg style="left:0;top:0" width="40" height="40" viewBox="0 0 40 40"><g transform="rotate(-40 21.5 21.5)"><rect x="8.5" y="15.25" width="26" height="12.5" fill="none" stroke="#dedede" stroke-width="2.2"/><rect x="8.5" y="15.25" width="7" height="12.5" fill="#dedede"/><path d="M16.5 24.75H33.5" stroke="#bdbdbd" stroke-width="1.2" stroke-dasharray="1.6 1.6"/></g><text x="3" y="14" font-family="Liberation Sans" font-weight="bold" font-size="12" fill="#e6e6e6">A</text></svg></div>
<div class="t" style="left:21.73px;top:308.9px;font-size:28.67px;color:#e4e400;transform:scaleX(1.14);transform-origin:0 0;">9308</div>
<div class="t j" style="left:125.84px;top:306.19px;width:99.25px;font-size:32.02px;color:#e4e400;transform:scaleX(0.91);transform-origin:0 0;">乾汽船</div>
<div class="t j" style="left:537.22px;top:307.38px;width:86.3px;font-size:27.84px;color:#19a9a9;transform:scaleX(0.92);transform-origin:0 0;">現在値</div>
<div class="t" style="left:734.69px;top:309.43px;font-size:23.78px;color:#f2f2f2;letter-spacing:0.21px;transform:scaleX(1.22);transform-origin:0 0;">2,680</div>
<div class="t" style="left:965.39px;top:309.43px;font-size:23.78px;color:#1a8c1a;letter-spacing:0.62px;transform:scaleX(1.22);transform-origin:0 0;">-176</div>
<div class="t" style="left:1133.09px;top:309.43px;font-size:23.78px;color:#1a8c1a;letter-spacing:0.54px;transform:scaleX(1.22);transform-origin:0 0;">-6.16%</div>
<div class="t" style="left:1258.09px;top:309.43px;font-size:23.78px;color:#f2f2f2;letter-spacing:0.74px;transform:scaleX(1.22);transform-origin:0 0;">21/09/21</div>
<div class="t" style="left:1398.49px;top:309.43px;font-size:23.78px;color:#f2f2f2;letter-spacing:0.81px;transform:scaleX(1.22);transform-origin:0 0;">15:00:00</div>
<div class="t j" style="left:1564.61px;top:307.38px;width:30.78px;font-size:27.84px;color:#f2f2f2;">東</div>
<div class="t" style="left:1600.93px;top:309.43px;font-size:23.78px;color:#f2f2f2;">1</div>
<div class="t j" style="left:1682.72px;top:307.38px;width:86.3px;font-size:27.84px;color:#19a9a9;transform:scaleX(0.92);transform-origin:0 0;">買気配</div>
<div class="t" style="left:1893.69px;top:309.43px;font-size:23.78px;color:#f2f2f2;letter-spacing:0.31px;transform:scaleX(1.22);transform-origin:0 0;">2,680</div>
<div class="t j" style="left:1994.71px;top:307.38px;width:86.3px;font-size:27.84px;color:#19a9a9;transform:scaleX(0.93);transform-origin:0 0;">売気配</div>
<div class="t" style="left:2206.09px;top:309.43px;font-size:23.78px;color:#f2f2f2;letter-spacing:0.29px;transform:scaleX(1.22);transform-origin:0 0;">2,682</div>
<div class="t j" style="left:21.96px;top:357.16px;width:56.03px;font-size:26.68px;color:#19a9a9;transform:scaleX(0.93);transform-origin:0 0;">始値</div>
<div class="t" style="left:206.09px;top:358.73px;font-size:23.78px;color:#f2f2f2;letter-spacing:0.33px;transform:scaleX(1.22);transform-origin:0 0;">2,706</div>
<div class="t" style="left:293.69px;top:358.73px;font-size:23.78px;color:#f2f2f2;letter-spacing:0.82px;transform:scaleX(1.22);transform-origin:0 0;">09:08</div>
<div class="t j" style="left:411.74px;top:357.16px;width:56.03px;font-size:26.68px;color:#19a9a9;transform:scaleX(0.94);transform-origin:0 0;">高値</div>
<div class="t" style="left:596.09px;top:358.73px;font-size:23.78px;color:#f2f2f2;letter-spacing:0.41px;transform:scaleX(1.22);transform-origin:0 0;">2,774</div>
<div class="t" style="left:683.69px;top:358.73px;font-size:23.78px;color:#f2f2f2;letter-spacing:0.7px;transform:scaleX(1.22);transform-origin:0 0;">09:33</div>
<div class="t j" style="left:800.71px;top:357.16px;width:56.03px;font-size:26.68px;color:#19a9a9;transform:scaleX(0.97);transform-origin:0 0;">安値</div>
<div class="t" style="left:986.19px;top:358.73px;font-size:23.78px;color:#f2f2f2;letter-spacing:0.31px;transform:scaleX(1.22);transform-origin:0 0;">2,628</div>
<div class="t" style="left:1075.39px;top:358.73px;font-size:23.78px;color:#f2f2f2;letter-spacing:0.54px;transform:scaleX(1.22);transform-origin:0 0;">10:28</div>
<div class="t j" style="left:1190.3px;top:357.16px;width:109.39px;font-size:26.68px;color:#19a9a9;transform:scaleX(0.97);transform-origin:0 0;">前日終値</div>
<div class="t" style="left:1428.69px;top:358.73px;font-size:23.78px;color:#f2f2f2;letter-spacing:0.27px;transform:scaleX(1.22);transform-origin:0 0;">2,856</div>
<div class="t j" style="left:1529.11px;top:357.16px;width:82.71px;font-size:26.68px;color:#19a9a9;transform:scaleX(0.97);transform-origin:0 0;">出来高</div>
<div class="t" style="left:1682.69px;top:358.73px;font-size:23.78px;color:#f2f2f2;letter-spacing:0.26px;transform:scaleX(1.22);transform-origin:0 0;">1,245,400</div>
<div class="t" style="left:2711.69px;top:484.43px;font-size:23.78px;color:#98a2b2;letter-spacing:0.41px;transform:scaleX(1.22);transform-origin:0 0;">2,900</div>
<div class="t" style="left:2711.69px;top:609.13px;font-size:23.78px;color:#98a2b2;letter-spacing:0.41px;transform:scaleX(1.22);transform-origin:0 0;">2,850</div>
<div class="t" style="left:2711.69px;top:733.83px;font-size:23.78px;color:#98a2b2;letter-spacing:0.41px;transform:scaleX(1.22);transform-origin:0 0;">2,800</div>
<div class="t" style="left:2711.69px;top:858.53px;font-size:23.78px;color:#98a2b2;letter-spacing:0.41px;transform:scaleX(1.22);transform-origin:0 0;">2,750</div>
<div class="t" style="left:2711.69px;top:983.23px;font-size:23.78px;color:#98a2b2;letter-spacing:0.41px;transform:scaleX(1.22);transform-origin:0 0;">2,700</div>
<div class="t" style="left:2711.69px;top:1107.93px;font-size:23.78px;color:#98a2b2;letter-spacing:0.41px;transform:scaleX(1.22);transform-origin:0 0;">2,650</div>
<div class="t" style="left:2711.69px;top:1232.63px;font-size:23.78px;color:#98a2b2;letter-spacing:0.41px;transform:scaleX(1.22);transform-origin:0 0;">2,600</div>
<div class="t" style="left:2712.69px;top:1317.03px;font-size:23.78px;color:#98a2b2;letter-spacing:0.1px;transform:scaleX(1.22);transform-origin:0 0;">100,000</div>
<div class="b" style="left:2712px;top:1380px;width:40px;height:15.5px;overflow:hidden"><div class="t" style="left:0.93px;top:4.93px;font-size:23.78px;color:#98a2b2;">0</div></div>
<div class="t" style="left:2712.72px;top:1435.13px;font-size:23.78px;color:#98a2b2;transform:scaleX(1.19);transform-origin:0 0;">50</div>
<div class="t" style="left:2712.93px;top:1517.13px;font-size:23.78px;color:#98a2b2;">0</div>
<div class="t" style="left:2711.66px;top:1610.33px;font-size:24.48px;color:#1c1c2c;letter-spacing:0.54px;transform:scaleX(1.22);transform-origin:0 0;">-59.5</div>
<div class="t" style="left:2728.36px;top:1033.63px;font-size:24.48px;color:#1c1c28;transform:scaleX(1.22);transform-origin:0 0;">2,680.0</div>
<div class="t" style="left:111.72px;top:1649px;font-size:23.36px;color:#98a2b2;letter-spacing:1.08px;transform:scaleX(1.22);transform-origin:0 0;">09:00</div>
<div class="t" style="left:359.72px;top:1649px;font-size:23.36px;color:#98a2b2;letter-spacing:1.08px;transform:scaleX(1.22);transform-origin:0 0;">10:00</div>
<div class="t" style="left:607.72px;top:1649px;font-size:23.36px;color:#98a2b2;letter-spacing:1.51px;transform:scaleX(1.22);transform-origin:0 0;">11:00</div>
<div class="t" style="left:751.72px;top:1649px;font-size:23.36px;color:#98a2b2;letter-spacing:1.08px;transform:scaleX(1.22);transform-origin:0 0;">12:30</div>
<div class="t" style="left:875.72px;top:1649px;font-size:23.36px;color:#98a2b2;letter-spacing:1.08px;transform:scaleX(1.22);transform-origin:0 0;">13:00</div>
<div class="t" style="left:1123.72px;top:1649px;font-size:23.36px;color:#98a2b2;letter-spacing:1.08px;transform:scaleX(1.22);transform-origin:0 0;">14:00</div>
<div class="t" style="left:1391.72px;top:1649px;font-size:23.36px;color:#98a2b2;letter-spacing:1.08px;transform:scaleX(1.22);transform-origin:0 0;">09:00</div>
<div class="t" style="left:1639.72px;top:1649px;font-size:23.36px;color:#98a2b2;letter-spacing:1.08px;transform:scaleX(1.22);transform-origin:0 0;">10:00</div>
<div class="t" style="left:1887.72px;top:1649px;font-size:23.36px;color:#98a2b2;letter-spacing:1.51px;transform:scaleX(1.22);transform-origin:0 0;">11:00</div>
<div class="t" style="left:2032.72px;top:1649px;font-size:23.36px;color:#98a2b2;letter-spacing:1.08px;transform:scaleX(1.22);transform-origin:0 0;">12:30</div>
<div class="t" style="left:2155.72px;top:1649px;font-size:23.36px;color:#98a2b2;letter-spacing:1.08px;transform:scaleX(1.22);transform-origin:0 0;">13:00</div>
<div class="t" style="left:2403.72px;top:1649px;font-size:23.36px;color:#98a2b2;letter-spacing:1.08px;transform:scaleX(1.22);transform-origin:0 0;">14:00</div>
<div class="t j" style="left:31.75px;top:1280.06px;width:78.39px;font-size:25.29px;color:#b4b4b4;transform:scaleX(0.99);transform-origin:0 0;">出来高</div>
<div class="t" style="left:31.82px;top:1416.27px;font-size:24.9px;color:#b4b4b4;transform:scaleX(1.05);transform-origin:0 0;">MACD</div>
<div class="t" style="left:163.8px;top:433.64px;font-size:22.38px;color:#e0584e;transform:scaleX(1.19);transform-origin:0 0;">09/17 09:00</div>
<div class="t j" style="left:163.95px;top:459.85px;width:47.26px;font-size:22.5px;color:#e0584e;transform:scaleX(0.93);transform-origin:0 0;">高値</div>
<div class="t" style="left:216.86px;top:461.64px;font-size:22.38px;color:#e0584e;transform:scaleX(1.13);transform-origin:0 0;">2904.0</div>
<div class="t" style="left:1647.3px;top:1176.56px;font-size:22.94px;color:#4aa6e6;transform:scaleX(1.16);transform-origin:0 0;">09/21 10:25</div>
<div class="t j" style="left:1657.46px;top:1205.06px;width:43.85px;font-size:20.88px;color:#4aa6e6;transform:scaleX(0.99);transform-origin:0 0;">安値</div>
<div class="t" style="left:1709.85px;top:1204.56px;font-size:22.94px;color:#4aa6e6;transform:scaleX(1.12);transform-origin:0 0;">2628.0</div>
<div class="t" style="left:1127.72px;top:1075.5px;font-size:23.36px;color:#14143a;letter-spacing:0.18px;transform:scaleX(1.22);transform-origin:0 0;">2713</div>
<div class="t" style="left:1127.75px;top:1108.8px;font-size:23.36px;color:#14143a;transform:scaleX(1.19);transform-origin:0 0;">2760G</div>
<div class="t j" style="left:1126.82px;top:1142.97px;width:27.37px;font-size:23.66px;color:#14143a;">勝</div>
<div class="t" style="left:1153.72px;top:1142.5px;font-size:23.36px;color:#14143a;letter-spacing:0.71px;transform:scaleX(1.22);transform-origin:0 0;">47</div>
<div class="b" style="left:0px;top:1720px;width:2880px;height:80px;background:linear-gradient(90deg,#cfe6ee 0%,#d2e4ee 50%,#d6dcea 100%);"></div>
<svg style="left:32px;top:1744px" width="32" height="32" viewBox="0 0 32 32"><path d="M0 4.6L12.8 2.8V15H0ZM14 2.6L32 0V15H14ZM0 16.2H12.8V28.4L0 26.6ZM14 16.2H32V32L14 29.6Z" fill="#000"/></svg>
<div class="b" style="left:96px;top:1720px;width:687px;height:80px;background:#fff;box-sizing:border-box;border:2px solid #c8c8c8;"></div>
<svg style="left:120px;top:1744px" width="32" height="33" viewBox="0 0 32 33"><circle cx="21" cy="11" r="9.2" fill="none" stroke="#111" stroke-width="2.2"/><path d="M14.3 17.8L1 31.5" stroke="#111" stroke-width="2.4"/></svg>
<div class="t j" style="left:175.76px;top:1747px;width:263.9px;font-size:29px;color:#1e1e1e;transform:scaleX(0.85);transform-origin:0 0;">ここに入力して検索</div>
<svg style="left:815px;top:1744.5px" width="34" height="30" viewBox="0 0 34 30"><rect x="5" y="8.5" width="17" height="14" fill="none" stroke="#111" stroke-width="2.2"/><path d="M1 1.2H24M1 29H24" stroke="#111" stroke-width="2.2"/><path d="M30 1.2V9M30 21V29" stroke="#111" stroke-width="2.2"/><circle cx="30" cy="15" r="3.2" fill="#111"/></svg>
<div class="b" style="left:892px;top:1732px;width:2px;height:56px;background:#111;"></div>
<div class="b" style="left:898.6px;top:1732px;width:2px;height:56px;background:#111;"></div>
<div class="b" style="left:1635px;top:1732px;width:2px;height:56px;background:#111;"></div>
<div class="b" style="left:1641.4px;top:1732px;width:2px;height:56px;background:#111;"></div>
<svg style="left:949px;top:1742.5px" width="42" height="34" viewBox="0 0 42 34"><path d="M0 4Q0 2 2 2H16L19 5.5H40Q42 5.5 42 7.5V32H0Z" fill="#e8a70c"/><path d="M0 9.5H42V32Q42 34 40 34H2Q0 34 0 32Z" fill="#ffd35a"/><path d="M13 34V23Q13 21 15 21H27Q29 21 29 23V34H24.5V26.5H17.5V34Z" fill="#3a8fdc"/></svg>
<svg style="left:1045.5px;top:1737px" width="45" height="45" viewBox="0 0 45 45"><circle cx="22.5" cy="22.5" r="22.3" fill="#fdd23e"/><path d="M22.5 22.5L3.2 11.3A22.3 22.3 0 0 1 41.8 11.3Z" fill="#e04a3a"/><path d="M22.5 0.2A22.3 22.3 0 0 1 41.8 11.3H22.5Z" fill="#e04a3a"/><path d="M3.2 11.3A22.3 22.3 0 0 0 20 44.6L29 28L22.5 22.5Z" fill="#2ea457"/><path d="M3.2 11.3L13.5 28L22.5 22.5Z" fill="#2ea457"/><circle cx="22.5" cy="22.5" r="10.4" fill="#f4f4f4"/><circle cx="22.5" cy="22.5" r="8.2" fill="#4a8af4"/></svg>
<div class="b" style="left:1028px;top:1796px;width:80px;height:4px;background:#0a78d4;"></div>
<div class="b" style="left:1142px;top:1736px;width:48px;height:48px;background:#0a78d4;"></div>
<svg style="left:1154px;top:1750px" width="21" height="19" viewBox="0 0 21 19"><path d="M0 3L14 0V18L0 15.5Z" fill="#e8f2fc"/><path d="M16 4.5H20V8.5H16ZM16 10H20V14H16Z" fill="#e8f2fc"/></svg>
<svg style="left:1240px;top:1738px" width="49" height="46" viewBox="0 0 49 46"><rect x="6" y="1" width="41" height="29" fill="#4fb8f0" stroke="#2d8cc8" stroke-width="2"/><path d="M7 29L46 2V29Z" fill="#3aa6e4"/><circle cx="11" cy="27" r="9.5" fill="#d6e8f2" fill-opacity="0.75" stroke="#9aa4ac" stroke-width="2"/><path d="M18 34L28 44" stroke="#7c8890" stroke-width="3.4" stroke-linecap="round"/></svg>
<div class="b" style="left:1314px;top:1720px;width:89px;height:76px;background:#e7f1f6;"></div>
<div class="b" style="left:1402.5px;top:1720px;width:2px;height:80px;background:#aebfcc;"></div>
<div class="b" style="left:1314px;top:1796px;width:89px;height:4px;background:#0a78d4;"></div>
<div class="b" style="left:1403px;top:1796px;width:6.5px;height:4px;background:#62a8e4;"></div>
<svg style="left:1338px;top:1736px" width="47" height="47" viewBox="0 0 47 47"><circle cx="23.5" cy="23.5" r="23.2" fill="#050505"/><rect x="9.5" y="20" width="3" height="11" fill="#fff"/><rect x="15" y="25" width="3" height="13" fill="#fff"/><rect x="20.5" y="16" width="3" height="14" fill="#fff"/><rect x="26" y="22" width="3" height="11" fill="#fff"/><rect x="31.5" y="13" width="3" height="11" fill="#fff"/><text x="9" y="15.5" font-family="Liberation Sans" font-weight="bold" font-size="9" fill="#fff">R</text><rect x="9" y="16.5" width="6.5" height="1" fill="#fff"/></svg>
<div class="t j" style="left:1658.12px;top:1747.32px;width:148.6px;font-size:24.36px;color:#161616;transform:scaleX(0.72);transform-origin:0 0;">デスクトップ</div>
<div class="t" style="left:1780px;top:1716px;font-size:26px;color:#6a6ab4;font-weight:bold">»</div>
<svg style="left:1877px;top:1739px" width="45" height="38" viewBox="0 0 45 38"><path d="M11 8A12 12 0 1 0 26 21A10.5 10.5 0 0 1 11 8Z" fill="#f8c21c" transform="translate(3,-6) rotate(18 18 16)"/><path d="M9 36Q1 36 1 28.5Q1 22 8 21.5Q9.5 13.5 18 13.5Q25 13.5 28 19.5Q31 17.5 35 19Q40 21 39.5 26Q44 27.5 43.5 32Q43 36 38 36Z" fill="#dbeaf6" stroke="#a8c4dc" stroke-width="1.2"/></svg>
<div class="t" style="left:1938.82px;top:1749.14px;font-size:25.73px;color:#141414;transform:scaleX(1.01);transform-origin:0 0;">24°C</div>
<div class="t j" style="left:2013.33px;top:1747.16px;width:189.43px;font-size:26.68px;color:#141414;transform:scaleX(0.88);transform-origin:0 0;">くもり時々晴れ</div>
<svg style="left:2222px;top:1753px" width="26" height="15" viewBox="0 0 26 15"><path d="M1 14L13 1.5L25 14" fill="none" stroke="#111" stroke-width="2.2"/></svg>
<svg style="left:2288.5px;top:1745px" width="23" height="30" viewBox="0 0 23 30"><rect x="1.2" y="9" width="13.5" height="12" rx="3" fill="none" stroke="#111" stroke-width="2.2"/><path d="M15 13L22 9.5V20.5L15 17Z" fill="#111"/><path d="M3 4.5Q9.5 -1 18 4.5M3 25.5Q9.5 31 18 25.5" fill="none" stroke="#111" stroke-width="1.8"/></svg>
<svg style="left:2347px;top:1748.5px" width="33" height="22" viewBox="0 0 33 22"><rect x="9" y="6" width="21" height="12" fill="none" stroke="#111" stroke-width="2.2"/><rect x="11.5" y="8.5" width="16" height="7" fill="#111"/><rect x="30.5" y="9.5" width="2.2" height="5" fill="#111"/><path d="M2.5 0V5M7.5 0V5M0.5 5H9.5V9Q9.5 12 5 12Q0.5 12 0.5 9ZM5 12V21" stroke="#111" stroke-width="1.8" fill="none"/></svg>
<svg style="left:2416.5px;top:1750.5px" width="26" height="25" viewBox="0 0 26 25"><path d="M1 24A23 23 0 0 1 24 1M7.5 24A16.5 16.5 0 0 1 24 7.5M14 24A10 10 0 0 1 24 14" fill="none" stroke="#111" stroke-width="2.2"/><circle cx="21" cy="21" r="3.2" fill="#111"/></svg>
<svg style="left:2474.5px;top:1746px" width="33" height="28" viewBox="0 0 33 28"><path d="M1 9.5H6.5L13.5 2.5V25.5L6.5 18.5H1Z" fill="none" stroke="#111" stroke-width="2"/><path d="M17.5 9.5Q20.5 14 17.5 18.5" fill="none" stroke="#111" stroke-width="1.8"/><path d="M22 6Q27 14 22 22" fill="none" stroke="#777" stroke-width="1.8"/><path d="M26.5 2.5Q33.5 14 26.5 25.5" fill="none" stroke="#999" stroke-width="1.8"/></svg>
<div class="t" style="left:2531.17px;top:1740.32px;font-size:40.56px;color:#111;">A</div>
<div class="b" style="left:2587px;top:1744px;width:32px;height:32px;background:#fff;box-sizing:border-box;border:1px solid #9a9aa6;"></div>
<svg style="left:2590px;top:1747px" width="26" height="26" viewBox="0 0 26 26"><circle cx="13" cy="13" r="12.4" fill="#1a1a1a"/><path d="M16.5 5V17.5Q16.5 21 12.5 20.5" fill="none" stroke="#fff" stroke-width="2.4"/></svg>
<div class="t" style="left:2662.56px;top:1731.24px;font-size:22.38px;color:#111;transform:scaleX(1.03);transform-origin:0 0;">8:50 PM</div>
<div class="t" style="left:2651.91px;top:1768.78px;font-size:22.8px;color:#111;transform:scaleX(1.07);transform-origin:0 0;">9/21/2021</div>
<svg style="left:2798px;top:1744px" width="34" height="33" viewBox="0 0 34 33"><path d="M0 0H32V24H19L15 30V24H0Z" fill="#0a0a0a"/><path d="M6 7H26M6 12H26M6 17H18" stroke="#fff" stroke-width="2"/><circle cx="25" cy="24" r="7" fill="#0a0a0a" stroke="#dfe2ec" stroke-width="1.6"/><path d="M28 20A5 5 0 1 0 29.5 26.5A4.2 4.2 0 0 1 28 20Z" fill="#fff"/></svg>
<div class="b" style="left:2870px;top:1720px;width:2px;height:80px;background:#a2a6b2;"></div>
</body></html>
